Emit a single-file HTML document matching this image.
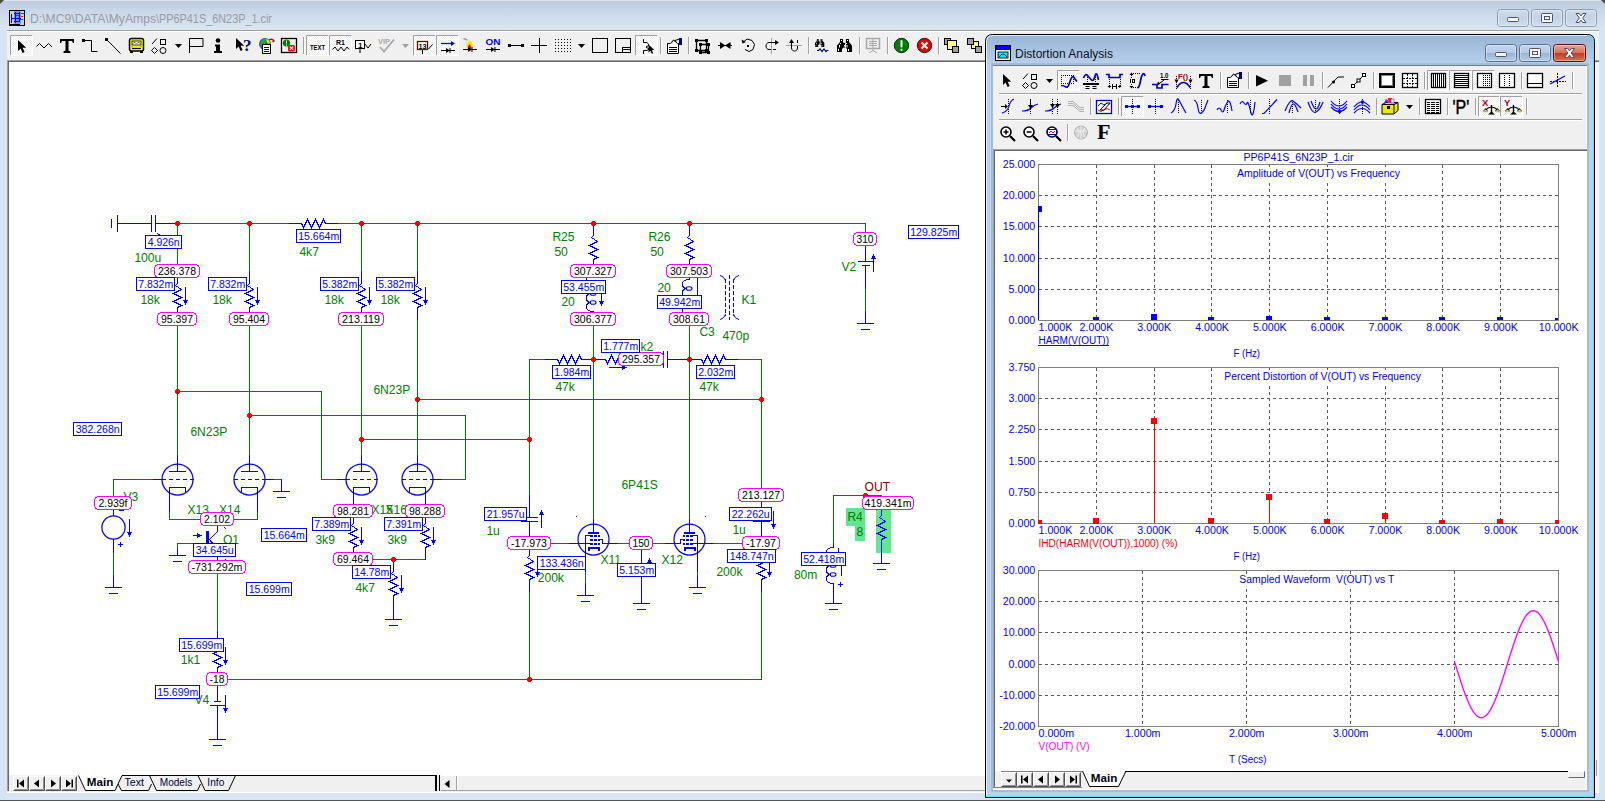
<!DOCTYPE html>
<html><head><meta charset="utf-8"><title>MC9</title>
<style>
html,body{margin:0;padding:0;background:#d7e4f2;overflow:hidden}
svg{display:block;font-family:"Liberation Sans",sans-serif}
text{white-space:pre}
</style></head><body>
<svg width="1605" height="801" viewBox="0 0 1605 801">
<defs>
<linearGradient id="gMain" x1="0" y1="0" x2="0" y2="1"><stop offset="0" stop-color="#bccadb"/><stop offset="0.35" stop-color="#c9d7e8"/><stop offset="1" stop-color="#dbe6f3"/></linearGradient>
<linearGradient id="gDist" gradientUnits="userSpaceOnUse" x1="0" y1="35" x2="0" y2="66"><stop offset="0" stop-color="#98b4d4"/><stop offset="0.5" stop-color="#a9c4e1"/><stop offset="1" stop-color="#b9d1ea"/></linearGradient>
<linearGradient id="gBtnI" x1="0" y1="0" x2="0" y2="1"><stop offset="0" stop-color="#cfdbea"/><stop offset="0.5" stop-color="#c4d2e4"/><stop offset="1" stop-color="#d3dfee"/></linearGradient>
<linearGradient id="gBtnA" x1="0" y1="0" x2="0" y2="1"><stop offset="0" stop-color="#c3d7ee"/><stop offset="0.48" stop-color="#b4cbe6"/><stop offset="0.5" stop-color="#98b4d4"/><stop offset="1" stop-color="#b6cfea"/></linearGradient>
<linearGradient id="gBtnR" x1="0" y1="0" x2="0" y2="1"><stop offset="0" stop-color="#e9a99b"/><stop offset="0.48" stop-color="#d8705b"/><stop offset="0.5" stop-color="#c03a1e"/><stop offset="1" stop-color="#d8765c"/></linearGradient>
<pattern id="dith" width="2" height="2" patternUnits="userSpaceOnUse"><rect width="2" height="2" fill="#fff"/><rect width="1" height="1" fill="#f0f0f0"/><rect x="1" y="1" width="1" height="1" fill="#f0f0f0"/></pattern>
</defs>

<rect x="0" y="0" width="1605" height="801" fill="#d7e4f2"/>
<rect x="0" y="0" width="1605" height="30" fill="url(#gMain)"/>
<rect x="0" y="800" width="1605" height="1" fill="#555"/>
<path d="M0 0h4L0 4z" fill="#4a4a4a"/><path d="M1605 0h-4l4 4z" fill="#4a4a4a"/>
<rect x="7" y="30" width="1592" height="763" fill="#f0f0f0"/>
<rect x="7" y="30" width="1592" height="1" fill="#a0a0a0"/><rect x="7" y="31" width="1592" height="1" fill="#fff"/>
<rect x="4" y="0" width="1597" height="1" fill="#e0e6f0"/>
<rect x="7" y="792" width="1592" height="1" fill="#fff"/>
<rect x="7" y="60" width="1592" height="1" fill="#a0a0a0"/><rect x="7" y="61" width="1592" height="1" fill="#696969"/>
<rect x="7" y="60" width="1" height="731" fill="#a0a0a0"/><rect x="8" y="61" width="1" height="730" fill="#696969"/>
<rect x="9" y="62" width="1590" height="713" fill="#fff"/>
<rect x="9" y="10" width="16" height="16" fill="#000"/><rect x="10" y="11" width="14" height="13" fill="#d4d0c8"/>
<rect x="14" y="11" width="7" height="13" fill="#6f9cf0"/>
<path d="M11.5 14v9M15.5 12v11M19.5 12v9M11 18.5h10M14 13.5h6M14 21.5h6" stroke="#0000ff" fill="none"/>
<path d="M16 15.5h3M21 13.5h3M21 16.5h2M20 19.5h3" stroke="#ff0000" fill="none"/>
<rect x="20" y="24" width="4" height="1" fill="#d4d0c8"/>
<text x="30" y="23" fill="#9a9aa4" font-size="12.8" text-anchor="start" stroke="none" textLength="126" lengthAdjust="spacingAndGlyphs">D:\MC9\DATA\MyAmps</text>
<text x="156" y="23" fill="#9a9aa4" font-size="12.8" text-anchor="start" stroke="none" textLength="116" lengthAdjust="spacingAndGlyphs">\PP6P41S_6N23P_1.cir</text>
<rect x="1497.5" y="9.5" width="31" height="17" rx="3" fill="url(#gBtnI)" stroke="#8c9ab4"/>
<rect x="1498.5" y="10.5" width="29" height="15" rx="2" fill="none" stroke="#ffffff" stroke-opacity="0.35"/>
<rect x="1507.5" y="17.5" width="11" height="4" rx="1" fill="#f4f4f4" stroke="#4d5366"/>
<rect x="1531.5" y="9.5" width="31" height="17" rx="3" fill="url(#gBtnI)" stroke="#8c9ab4"/>
<rect x="1532.5" y="10.5" width="29" height="15" rx="2" fill="none" stroke="#ffffff" stroke-opacity="0.35"/>
<rect x="1541.5" y="13.5" width="11" height="9" rx="1" fill="#f4f4f4" stroke="#4d5366"/>
<rect x="1544.5" y="16.5" width="5" height="3" fill="none" stroke="#4d5366"/>
<rect x="1565.5" y="9.5" width="31" height="17" rx="3" fill="url(#gBtnI)" stroke="#8c9ab4"/>
<rect x="1566.5" y="10.5" width="29" height="15" rx="2" fill="none" stroke="#ffffff" stroke-opacity="0.35"/>
<path d="M1576.0 13.5h3.2l1.8 2.4 1.8 -2.4h3.2l-3.4 4.5 3.4 4.5h-3.2l-1.8 -2.4 -1.8 2.4h-3.2l3.4 -4.5z" fill="#f6f6f6" stroke="#4d5366" stroke-width="1" stroke-linejoin="round"/>
<rect x="10" y="35" width="23" height="21" fill="url(#dith)"/>
<path d="M10.5 55.5V35.5H32.5" stroke="#a0a0a0" fill="none"/>
<path d="M10.5 55.5H32.5V35.5" stroke="#ffffff" fill="none"/>
<g transform="translate(18,40)" ><path d="M0 0v11l2.6-2.4 2 4.4 2-0.9-2-4.3h3.6z" fill="#000"/></g>
<path d="M36.5 46.500l3-3 4.5 4.5 4.500-4.5 3.5 3.5" stroke="#000" fill="none"/>
<g transform="translate(60,39)" ><path d="M0 0h14v4h-1l-1-2h-3.5v9.500l2 1v1.500h-7v-1.500l2-1v-9.500h-3.500l-1 2h-1z" fill="#000"/></g>
<rect x="82" y="39" width="3" height="3" fill="#000"/><path d="M84 40.500h7.500v11h6" stroke="#000" fill="none"/>
<rect x="105" y="38" width="3" height="3" fill="#000"/><path d="M106.5 39.500l14 14" stroke="#000" fill="none"/>
<g transform="translate(129,38)" ><rect x="0.5" y="0.5" width="14" height="12.5" rx="2" fill="#ffff00" stroke="#000" stroke-width="1.5"/><rect x="3" y="3" width="9" height="4" fill="#fff" stroke="#000" stroke-width="0.800"/><path d="M4 5.500c1-1.5 2-1.5 3 0M8 5.500c1-1.5 2-1.5 3 0" stroke="#000" fill="none" stroke-width="0.800"/><path d="M3 10.500h9" stroke="#000" stroke-width="1.200"/><rect x="1" y="13" width="3" height="2" fill="#000"/><rect x="11" y="13" width="3" height="2" fill="#000"/><rect x="2" y="8" width="2" height="1.5" fill="#c8c800"/><rect x="11" y="8" width="2" height="1.5" fill="#c8c800"/></g>
<g transform="translate(151,38)" ><g fill="none" stroke="#000"><path d="M1 6L6 0.5"/><rect x="9.5" y="1.5" width="5" height="5"/><path d="M3.5 9.5l3 3-3 3-3-3z"/><circle cx="12" cy="12.5" r="3"/></g></g>
<path d="M175 44h7l-3.5 4z" fill="#000"/>
<path d="M189.5 38.500v14.500M189.5 38.500h13.500v8h-13.5" stroke="#000" fill="none"/>
<circle cx="218" cy="40.5" r="2.300" fill="#000"/><path d="M215 44.500h5v6.500h2v2h-8v-2h2v-4.500h-1z" fill="#000"/>
<g transform="translate(236,38)" ><path d="M0 0v11l2.6-2.4 2 4.4 2-0.9-2-4.3h3.6z" fill="#000"/></g>
<text x="243" y="51" fill="#000080" font-size="17" text-anchor="start" stroke="none" font-weight="bold" font-family="Liberation Serif">?</text>
<circle cx="265" cy="44" r="6" fill="#1c62c4"/><path d="M261 41q2-3 5-2l1 3-3 2-2 3-2-3z" fill="#1db01d"/><path d="M266 39l3 1 1 3-2 1z" fill="#e0e020"/>
<rect x="262.5" y="44.5" width="8" height="9" fill="#fff" stroke="#000"/><path d="M264 47.500h5M264 49.500h5M264 51.500h5" stroke="#0000c0"/>
<path d="M269 40q3-2 5 1l-1.5 1" stroke="#a01818" fill="none" stroke-width="1.5"/>
<rect x="281.5" y="38.5" width="15" height="14" fill="#f0f0f0" stroke="#000" stroke-width="1.300"/>
<circle cx="286.5" cy="43" r="3.600" fill="#008000"/><rect x="286" y="40.5" width="1" height="3" fill="#fff"/><rect x="286" y="44.5" width="1" height="1" fill="#fff"/>
<rect x="288" y="45" width="7" height="6.5" rx="1.5" fill="#ff0000"/><path d="M289.800 46.500l3.400 3.400M293.200 46.500l-3.400 3.400" stroke="#fff" stroke-width="1.100"/>
<rect x="303" y="37" width="1" height="17" fill="#a0a0a0"/><rect x="304" y="37" width="1" height="17" fill="#fff"/>
<rect x="306" y="35" width="23" height="21" fill="url(#dith)"/>
<path d="M306.5 55.5V35.5H328.5" stroke="#a0a0a0" fill="none"/>
<path d="M306.5 55.5H328.5V35.5" stroke="#ffffff" fill="none"/>
<text x="310" y="49.5" fill="#000" font-size="7.5" text-anchor="start" stroke="none" font-weight="bold" textLength="15" lengthAdjust="spacingAndGlyphs">TEXT</text>
<rect x="329" y="35" width="23" height="21" fill="url(#dith)"/>
<path d="M329.5 55.5V35.5H351.5" stroke="#a0a0a0" fill="none"/>
<path d="M329.5 55.5H351.5V35.5" stroke="#ffffff" fill="none"/>
<text x="336" y="44.5" fill="#000" font-size="7" text-anchor="start" stroke="none" font-weight="bold">R1</text>
<path d="M332.5 49.500l2.500-2.5 3 4 3-4 3 4 3-4 2 2.5" stroke="#000" fill="none"/>
<rect x="355.5" y="40.5" width="9" height="8" fill="#fff" stroke="#000"/><path d="M360 49v4M365 44l3 4 3-4" stroke="#000" fill="none"/>
<text x="358" y="47.5" fill="#000" font-size="8" text-anchor="start" stroke="none" font-weight="bold">1</text>
<text x="378" y="44" fill="#a8a8a8" font-size="7.5" text-anchor="start" stroke="none" font-weight="bold" textLength="12" lengthAdjust="spacingAndGlyphs">VIP</text>
<path d="M380 47l4 4.5 10-12" stroke="#a8a8a8" fill="none" stroke-width="1.800"/>
<path d="M402 44h7l-3.5 4z" fill="#a0a0a0"/>
<rect x="413" y="35" width="23" height="21" fill="url(#dith)"/>
<path d="M413.5 55.5V35.5H435.5" stroke="#a0a0a0" fill="none"/>
<path d="M413.5 55.5H435.5V35.5" stroke="#ffffff" fill="none"/>
<rect x="417.5" y="41.5" width="10" height="8" fill="#fff" stroke="#800000" stroke-width="1.300"/><path d="M422.5 50v4M428.5 49l4-4.5" stroke="#000" fill="none"/>
<text x="418.5" y="48.5" fill="#000" font-size="8" text-anchor="start" stroke="none" font-weight="bold" textLength="8" lengthAdjust="spacingAndGlyphs">13</text>
<rect x="436" y="35" width="23" height="21" fill="url(#dith)"/>
<path d="M436.5 55.5V35.5H458.5" stroke="#a0a0a0" fill="none"/>
<path d="M436.5 55.5H458.5V35.5" stroke="#ffffff" fill="none"/>
<path d="M441 43.500h12" stroke="#0000ff" stroke-width="1.300" fill="none"/><path d="M451 41l4 2.500-4 2.500z" fill="#0000ff"/>
<g transform="translate(441,48)" ><path d="M0 2.500h14M9 0v5" stroke="#000" fill="none"/><path d="M5 0v5l4-2.500z" fill="#000"/></g>
<path d="M469.5 44c-2.5 2-2 5.5 0 6.5 2-1 2.500-4.5 0-6.500z" fill="#ff0000"/><path d="M469.5 40c-4 3-4 8-1.5 10-1-3 0-5 1.500-6 1.5 1 2.5 3 1.5 6 2.500-2 2.500-7-1.500-10z" fill="#ffe800"/><path d="M463.5 38.500l4 1.5" stroke="#a0a0a0" stroke-width="1.5"/>
<g transform="translate(463,47)" ><path d="M0 2.500h14M9 0v5" stroke="#000" fill="none"/><path d="M5 0v5l4-2.500z" fill="#000"/></g>
<text x="485.5" y="45" fill="#0000ff" font-size="9.5" text-anchor="start" stroke="none" font-weight="bold" textLength="15" lengthAdjust="spacingAndGlyphs">ON</text>
<g transform="translate(486,47)" ><path d="M0 2.500h14M9 0v5" stroke="#000" fill="none"/><path d="M5 0v5l4-2.500z" fill="#000"/></g>
<rect x="508" y="44" width="3" height="3" fill="#000"/><rect x="521" y="44" width="3" height="3" fill="#000"/><path d="M509 45.500h14" stroke="#000"/>
<path d="M531 45.500h16M539.5 38v15" stroke="#000" fill="none"/>
<g fill="#000"><rect x="555" y="39" width="1" height="1"/><rect x="555" y="42" width="1" height="1"/><rect x="555" y="45" width="1" height="1"/><rect x="555" y="48" width="1" height="1"/><rect x="555" y="51" width="1" height="1"/><rect x="558" y="39" width="1" height="1"/><rect x="558" y="42" width="1" height="1"/><rect x="558" y="45" width="1" height="1"/><rect x="558" y="48" width="1" height="1"/><rect x="558" y="51" width="1" height="1"/><rect x="561" y="39" width="1" height="1"/><rect x="561" y="42" width="1" height="1"/><rect x="561" y="45" width="1" height="1"/><rect x="561" y="48" width="1" height="1"/><rect x="561" y="51" width="1" height="1"/><rect x="564" y="39" width="1" height="1"/><rect x="564" y="42" width="1" height="1"/><rect x="564" y="45" width="1" height="1"/><rect x="564" y="48" width="1" height="1"/><rect x="564" y="51" width="1" height="1"/><rect x="567" y="39" width="1" height="1"/><rect x="567" y="42" width="1" height="1"/><rect x="567" y="45" width="1" height="1"/><rect x="567" y="48" width="1" height="1"/><rect x="567" y="51" width="1" height="1"/><rect x="570" y="39" width="1" height="1"/><rect x="570" y="42" width="1" height="1"/><rect x="570" y="45" width="1" height="1"/><rect x="570" y="48" width="1" height="1"/><rect x="570" y="51" width="1" height="1"/></g>
<path d="M578 44h7l-3.5 4z" fill="#000"/>
<rect x="592.5" y="38.5" width="15" height="14" fill="none" stroke="#000"/>
<rect x="615.5" y="38.5" width="15" height="14" fill="none" stroke="#000"/><rect x="622.5" y="47.5" width="8" height="5" fill="none" stroke="#000"/><path d="M623 49.500h7" stroke="#000"/>
<rect x="635" y="35" width="23" height="21" fill="url(#dith)"/>
<path d="M635.5 55.5V35.5H657.5" stroke="#a0a0a0" fill="none"/>
<path d="M635.5 55.5H657.5V35.5" stroke="#ffffff" fill="none"/>
<path d="M643.5 39v3.500h3.500l2 2.500-3 2 3 2-2 1.500h-3.500v3.5" stroke="#000" fill="none"/>
<g transform="translate(648.500,44.500) scale(0.72)"><path d="M0 0v11l2.6-2.4 2 4.4 2-0.9-2-4.3h3.6z" fill="#000"/></g>
<rect x="660" y="37" width="1" height="17" fill="#a0a0a0"/><rect x="661" y="37" width="1" height="17" fill="#fff"/>
<g transform="translate(666,38)" ><g stroke="#000" fill="none"><path d="M1.5 15.500v-10h3l3-3.5 4 3.500h1v10z" fill="#fff"/><path d="M3 9.500h8M3 11.500h8M3 13.500h8"/><path d="M6 4.500l2-2.5 3 2.5" stroke-dasharray="1 1"/><path d="M9 2.500l4.500-1.5" /><rect x="13.5" y="0.5" width="2" height="6" fill="#00008b" stroke="#00008b"/></g></g>
<rect x="688" y="37" width="1" height="17" fill="#a0a0a0"/><rect x="689" y="37" width="1" height="17" fill="#fff"/>
<path d="M696.5 40.500h10v10h-10zM700.5 44.500h8v8h-8z" stroke="#000" fill="none" stroke-width="1.300"/>
<rect x="695" y="39" width="3" height="3" fill="#000"/>
<rect x="705" y="39" width="3" height="3" fill="#000"/>
<rect x="695" y="49" width="3" height="3" fill="#000"/>
<rect x="705" y="49" width="3" height="3" fill="#000"/>
<rect x="699" y="43" width="3" height="3" fill="#000"/>
<rect x="707" y="43" width="3" height="3" fill="#000"/>
<rect x="699" y="51" width="3" height="3" fill="#000"/>
<rect x="707" y="51" width="3" height="3" fill="#000"/>
<path d="M718 45.500h14" stroke="#000"/><path d="M720 42l5.5 3.500-5.5 3.500zM730.5 42l-5.5 3.5 5.5 3.500z" fill="#000"/>
<path d="M744 41.500l3-2.5 5 1.5 2.5 4-1.5 5-4 2-4-2" stroke="#000" fill="none"/><path d="M741.5 39.500l1 4 3.500-1.500z" fill="#000"/><rect x="747" y="45" width="2" height="2" fill="#000"/>
<path d="M771.5 38v16" stroke="#a0a0a0"/><path d="M777 42.500h-8c-4 0-4 7 0 7h2M773 49.500h3" stroke="#000" fill="none"/><path d="M775 40l4 2.500-4 2.500z" fill="#000"/>
<path d="M786 45.500h16" stroke="#a0a0a0"/><path d="M791.5 41v7c0 4 6 4 6 0v-2M797.5 43v-3" stroke="#000" fill="none"/><path d="M789 43l2.500-4 2.5 4z" fill="#000"/>
<rect x="808" y="37" width="1" height="17" fill="#a0a0a0"/><rect x="809" y="37" width="1" height="17" fill="#fff"/>
<g transform="translate(815,39) scale(0.62)"><path d="M3 0h3v3l1 1.500v3.500l-2 2v3h-5v-6.500l3-3.500zM12 0h-3v3l-1 1.500v3.500l2 2v3h5v-6.500l-3-3.500zM6 4h3v4.500h-3z" fill="#000"/><g fill="#fff"><rect x="4" y="1" width="1" height="1"/><rect x="10" y="1" width="1" height="1"/><rect x="3" y="4" width="1" height="1"/><rect x="9" y="4" width="1" height="1"/><rect x="2" y="6" width="1" height="2.5"/><rect x="7" y="6" width="1" height="1.5"/><rect x="9.5" y="6" width="1" height="2.5"/><rect x="1" y="10" width="1" height="2"/><rect x="11" y="10" width="1" height="2"/></g></g>
<rect x="815" y="47" width="15" height="7" fill="#f0f0f0"/><rect x="815" y="39" width="15" height="0" fill="none"/>
<path d="M817 50.500h1.500l1.500-1.5 2 2.5 2-2.5 2 2.5 1-1h1.5" stroke="#000080" stroke-width="1.200" fill="none"/>
<g transform="translate(837,39)" ><path d="M3 0h3v3l1 1.500v3.500l-2 2v3h-5v-6.500l3-3.500zM12 0h-3v3l-1 1.500v3.500l2 2v3h5v-6.500l-3-3.500zM6 4h3v4.500h-3z" fill="#000"/><g fill="#fff"><rect x="4" y="1" width="1" height="1"/><rect x="10" y="1" width="1" height="1"/><rect x="3" y="4" width="1" height="1"/><rect x="9" y="4" width="1" height="1"/><rect x="2" y="6" width="1" height="2.5"/><rect x="7" y="6" width="1" height="1.5"/><rect x="9.5" y="6" width="1" height="2.5"/><rect x="1" y="10" width="1" height="2"/><rect x="11" y="10" width="1" height="2"/></g></g>
<rect x="859" y="37" width="1" height="17" fill="#a0a0a0"/><rect x="860" y="37" width="1" height="17" fill="#fff"/>
<g stroke="#a8a8a8" fill="none"><rect x="866.5" y="38.5" width="13" height="10" stroke-width="1.5"/><path d="M869 41.500h8M869 43.500h8M869 45.500h8M873 38v10M873 49v2M869 53l4-2.5 4 2.5"/></g>
<rect x="887" y="37" width="1" height="17" fill="#a0a0a0"/><rect x="888" y="37" width="1" height="17" fill="#fff"/>
<circle cx="901.5" cy="45.5" r="7.200" fill="#008000" stroke="#000" stroke-width="0.800"/><path d="M901.5 41v5.5" stroke="#fff" stroke-width="2" stroke-linecap="round"/><circle cx="901.5" cy="49.800" r="1.100" fill="#fff"/>
<circle cx="924.5" cy="45.5" r="7.200" fill="#ee0000" stroke="#000" stroke-width="0.800"/><path d="M921.5 42.500l6 6M927.5 42.500l-6 6" stroke="#fff" stroke-width="2"/>
<rect x="938" y="37" width="1" height="17" fill="#a0a0a0"/><rect x="939" y="37" width="1" height="17" fill="#fff"/>
<rect x="944.5" y="38.5" width="6" height="6" fill="#a0a0a0" stroke="#000"/><rect x="947.5" y="40.5" width="9" height="9" fill="#ffff80" stroke="#000"/><rect x="952.5" y="46.5" width="6" height="6" fill="#a0a0a0" stroke="#000"/>
<rect x="971.5" y="41.5" width="7" height="7" fill="#ffff80" stroke="#000"/><rect x="967.5" y="38.5" width="6" height="6" fill="#a0a0a0" stroke="#000"/><rect x="975.5" y="46.5" width="6" height="6" fill="#a0a0a0" stroke="#000"/>
<g fill="none" stroke-width="1" stroke-linecap="square" shape-rendering="crispEdges">
<polyline points="177.5,223.5 289.5,223.5" stroke="#008000" />
<polyline points="337.5,223.5 865.5,223.5 865.5,232.5" stroke="#008000" />
<polyline points="177.5,223.5 177.5,271.5" stroke="#008000" />
<polyline points="177.5,319.5 177.5,455.5" stroke="#008000" />
<polyline points="249.5,223.5 249.5,271.5" stroke="#008000" />
<polyline points="249.5,319.5 249.5,455.5" stroke="#008000" />
<polyline points="361.5,223.5 361.5,271.5" stroke="#008000" />
<polyline points="361.5,319.5 361.5,455.5" stroke="#008000" />
<polyline points="417.5,223.5 417.5,271.5" stroke="#008000" />
<polyline points="417.5,319.5 417.5,455.5" stroke="#008000" />
<polyline points="177.5,391.5 321.5,391.5 321.5,479.5 337.5,479.5" stroke="#008000" />
<polyline points="249.5,415.5 465.5,415.5 465.5,479.5 441.5,479.5" stroke="#008000" />
<polyline points="361.5,439.5 529.5,439.5" stroke="#008000" />
<polyline points="417.5,399.5 761.5,399.5" stroke="#008000" />
<polyline points="113.5,496.5 113.5,479.5 153.5,479.5" stroke="#008000" />
<polyline points="113.5,552.5 113.5,575.5" stroke="#008000" />
<polyline points="273.5,479.5 281.5,479.5" stroke="#008000" />
<polyline points="169.5,511.5 169.5,519.5 257.5,519.5 257.5,511.5" stroke="#008000" />
<polyline points="193.5,543.5 177.5,543.5 177.5,549.5" stroke="#008000" />
<polyline points="217.5,574.5 217.5,631.5" stroke="#008000" />
<polyline points="228.5,679.5 761.5,679.5 761.5,591.5" stroke="#008000" />
<polyline points="529.5,679.5 529.5,591.5" stroke="#008000" />
<polyline points="529.5,495.5 529.5,359.5 545.5,359.5" stroke="#008000" />
<polyline points="593.5,326.5 593.5,519.5" stroke="#008000" />
<polyline points="689.5,326.5 689.5,519.5" stroke="#008000" />
<polyline points="737.5,359.5 761.5,359.5 761.5,489.5" stroke="#008000" />
<polyline points="551.5,543.5 569.5,543.5" stroke="#008000" />
<polyline points="653.5,543.5 665.5,543.5" stroke="#008000" />
<polyline points="617.5,543.5 629.5,543.5" stroke="#008000" />
<polyline points="713.5,543.5 742.5,543.5" stroke="#008000" />
<polyline points="353.5,559.5 425.5,559.5" stroke="#008000" />
<polyline points="585.5,567.5 585.5,583.5" stroke="#008000" />
<polyline points="697.5,567.5 697.5,575.5" stroke="#008000" />
<polyline points="865.5,288.5 865.5,311.5" stroke="#008000" />
<polyline points="833.5,543.5 833.5,495.5 881.5,495.5" stroke="#008000" />
<polyline points="111.5,219.5 111.5,227.5" stroke="#0000ff" />
<polyline points="117.5,215.5 117.5,231.5" stroke="#0000ff" />
<polyline points="117.5,223.5 151.5,223.5" stroke="#0000ff" />
<polyline points="151.5,215.5 151.5,231.5" stroke="#0000ff" />
<polyline points="155.5,215.5 155.5,231.5" stroke="#0000ff" />
<polyline points="155.5,223.5 177.5,223.5" stroke="#0000ff" />
<polyline points="157.5,233.5 160.5,235.5" stroke="#0000ff" />
<polyline points="289.5,223.5 301.5,223.5 303.5,227.5 307.5,219.5 311.5,227.5 315.5,219.5 319.5,227.5 323.5,219.5 325.5,223.5 337.5,223.5" stroke="#0000ff" />
<polyline points="177.5,271.5 177.5,283.5 175.5,285.5 181.5,289.5 173.5,293.5 181.5,297.5 173.5,301.5 181.5,305.5 177.5,307.5 177.5,319.5" stroke="#0000ff" />
<polyline points="185.5,287.5 185.5,303.5" stroke="#0000ff" />
<path d="M183 300h5l-2.5 5z" fill="#0000ff" stroke="none"/>
<polyline points="249.5,271.5 249.5,283.5 247.5,285.5 253.5,289.5 245.5,293.5 253.5,297.5 245.5,301.5 253.5,305.5 249.5,307.5 249.5,319.5" stroke="#0000ff" />
<polyline points="257.5,287.5 257.5,303.5" stroke="#0000ff" />
<path d="M255 300h5l-2.5 5z" fill="#0000ff" stroke="none"/>
<polyline points="361.5,271.5 361.5,283.5 359.5,285.5 365.5,289.5 357.5,293.5 365.5,297.5 357.5,301.5 365.5,305.5 361.5,307.5 361.5,319.5" stroke="#0000ff" />
<polyline points="369.5,287.5 369.5,303.5" stroke="#0000ff" />
<path d="M367 300h5l-2.5 5z" fill="#0000ff" stroke="none"/>
<polyline points="417.5,271.5 417.5,283.5 415.5,285.5 421.5,289.5 413.5,293.5 421.5,297.5 413.5,301.5 421.5,305.5 417.5,307.5 417.5,319.5" stroke="#0000ff" />
<polyline points="425.5,287.5 425.5,303.5" stroke="#0000ff" />
<path d="M423 300h5l-2.5 5z" fill="#0000ff" stroke="none"/>
<polyline points="593.5,223.5 593.5,235.5 591.5,237.5 597.5,241.5 589.5,245.5 597.5,249.5 589.5,253.5 597.5,257.5 593.5,259.5 593.5,271.5" stroke="#0000ff" />
<polyline points="689.5,223.5 689.5,235.5 687.5,237.5 693.5,241.5 685.5,245.5 693.5,249.5 685.5,253.5 693.5,257.5 689.5,259.5 689.5,271.5" stroke="#0000ff" />
<polyline points="593.5,271.5 593.5,275.5" stroke="#0000ff" />
<path d="M593.5 275.5C587.5 275.5 586.5 277.5 586.5 280.0C586.5 282.5 587.5 284.5 590.5 284.5M590.5 284.5C587.5 284.5 586.5 286.5 586.5 289.0C586.5 291.5 587.5 293.5 590.5 293.5M590.5 293.5C587.5 293.5 586.5 295.5 586.5 298.0C586.5 300.5 587.5 302.5 590.5 302.5M590.5 302.5C587.5 302.5 586.5 304.5 586.5 307.0C586.5 309.5 587.5 311.5 593.5 311.5" stroke="#0000ff" shape-rendering="crispEdges"/>
<ellipse cx="593.0" cy="284.5" rx="3" ry="1.8" stroke="#0000ff" shape-rendering="auto" stroke-width="1.1"/>
<ellipse cx="593.0" cy="293.5" rx="3" ry="1.8" stroke="#0000ff" shape-rendering="auto" stroke-width="1.1"/>
<ellipse cx="593.0" cy="302.5" rx="3" ry="1.8" stroke="#0000ff" shape-rendering="auto" stroke-width="1.1"/>
<polyline points="593.5,311.5 593.5,319.5" stroke="#0000ff" />
<polyline points="601.5,282.5 601.5,304.5" stroke="#0000ff" />
<path d="M599 301h5l-2.5 5z" fill="#0000ff" stroke="none"/>
<polyline points="689.5,271.5 689.5,279.5" stroke="#0000ff" />
<path d="M689.5 279.5C683.5 279.5 682.5 281.5 682.5 284.0C682.5 286.5 683.5 288.5 686.5 288.5M686.5 288.5C683.5 288.5 682.5 290.5 682.5 293.0C682.5 295.5 683.5 297.5 686.5 297.5M686.5 297.5C683.5 297.5 682.5 299.5 682.5 302.0C682.5 304.5 683.5 306.5 686.5 306.5M686.5 306.5C683.5 306.5 682.5 308.5 682.5 311.0C682.5 313.5 683.5 315.5 689.5 315.5" stroke="#0000ff" shape-rendering="crispEdges"/>
<ellipse cx="689.0" cy="288.5" rx="3" ry="1.8" stroke="#0000ff" shape-rendering="auto" stroke-width="1.1"/>
<ellipse cx="689.0" cy="297.5" rx="3" ry="1.8" stroke="#0000ff" shape-rendering="auto" stroke-width="1.1"/>
<ellipse cx="689.0" cy="306.5" rx="3" ry="1.8" stroke="#0000ff" shape-rendering="auto" stroke-width="1.1"/>
<polyline points="689.5,315.5 689.5,319.5" stroke="#0000ff" />
<polyline points="697.5,274.5 697.5,305.5" stroke="#0000ff" />
<path d="M695 278h5l-2.5 -5z" fill="#0000ff" stroke="none"/>
<path d="M725.5 279V316" stroke="#0000ff" stroke-dasharray="4 2" stroke-linecap="butt"/>
<path d="M729.5 275V320" stroke="#0000ff" stroke-dasharray="4 2" stroke-linecap="butt"/>
<path d="M733.5 279V316" stroke="#0000ff" stroke-dasharray="4 2" stroke-linecap="butt"/>
<path d="M720.5 275.500q4 1 5 5M738.5 275.500q-4 1-5 5M720.5 319.500q4-1 5-5M738.5 319.500q-4-1-5-5" stroke="#0000ff" shape-rendering="auto"/>
<polyline points="865.5,246.5 865.5,261.5" stroke="#0000ff" />
<polyline points="858.5,261.5 872.5,261.5" stroke="#0000ff" />
<polyline points="862.5,265.5 869.5,265.5" stroke="#0000ff" />
<polyline points="865.5,265.5 865.5,288.5" stroke="#0000ff" />
<polyline points="865.5,311.5 865.5,323.5" stroke="#0000ff" />
<polyline points="857.5,323.5 873.5,323.5" stroke="#0000ff" />
<polyline points="861.5,329.5 869.5,329.5" stroke="#0000ff" />
<polyline points="873.5,255.5 873.5,271.5" stroke="#0000ff" />
<path d="M871 259h5l-2.5 -5z" fill="#0000ff" stroke="none"/>
<polyline points="545.5,359.5 557.5,359.5 559.5,363.5 563.5,355.5 567.5,363.5 571.5,355.5 575.5,363.5 579.5,355.5 581.5,359.5 593.5,359.5" stroke="#0000ff" />
<polyline points="689.5,359.5 701.5,359.5 703.5,363.5 707.5,355.5 711.5,363.5 715.5,355.5 719.5,363.5 723.5,355.5 725.5,359.5 737.5,359.5" stroke="#0000ff" />
<polyline points="593.5,359.5 605.5,359.5 607.5,363.5 611.5,355.5 615.5,363.5 619.5,355.5 623.5,363.5" stroke="#0000ff" />
<polyline points="609.5,367.5 625.5,367.5" stroke="#0000ff" />
<path d="M622 365v5l5 -2.5z" fill="#0000ff" stroke="none"/>
<polyline points="663.5,351.5 663.5,367.5" stroke="#0000ff" />
<polyline points="667.5,351.5 667.5,367.5" stroke="#0000ff" />
<polyline points="667.5,359.5 689.5,359.5" stroke="#0000ff" />
<circle cx="177.5" cy="479.5" r="15.5" stroke="#0000ff" stroke-width="1.25" shape-rendering="geometricPrecision"/>
<polyline points="177.5,455.5 177.5,471.5" stroke="#0000ff" />
<polyline points="169.5,471.5 185.5,471.5" stroke="#0000ff" />
<path d="M161.5 479.5H193.5" stroke="#0000ff" stroke-dasharray="4 3" stroke-dashoffset="-0.5" stroke-linecap="butt"/>
<polyline points="153.5,479.5 161.5,479.5" stroke="#0000ff" />
<polyline points="169.5,511.5 169.5,487.5 185.5,487.5 185.5,491.5" stroke="#0000ff" />
<circle cx="249.5" cy="479.5" r="15.5" stroke="#0000ff" stroke-width="1.25" shape-rendering="geometricPrecision"/>
<polyline points="249.5,455.5 249.5,471.5" stroke="#0000ff" />
<polyline points="241.5,471.5 257.5,471.5" stroke="#0000ff" />
<path d="M233.5 479.5H265.5" stroke="#0000ff" stroke-dasharray="4 3" stroke-dashoffset="-0.5" stroke-linecap="butt"/>
<polyline points="273.5,479.5 265.5,479.5" stroke="#0000ff" />
<polyline points="257.5,511.5 257.5,487.5 241.5,487.5 241.5,491.5" stroke="#0000ff" />
<circle cx="361.5" cy="479.5" r="15.5" stroke="#0000ff" stroke-width="1.25" shape-rendering="geometricPrecision"/>
<polyline points="361.5,455.5 361.5,471.5" stroke="#0000ff" />
<polyline points="353.5,471.5 369.5,471.5" stroke="#0000ff" />
<path d="M345.5 479.5H377.5" stroke="#0000ff" stroke-dasharray="4 3" stroke-dashoffset="-0.5" stroke-linecap="butt"/>
<polyline points="337.5,479.5 345.5,479.5" stroke="#0000ff" />
<polyline points="353.5,511.5 353.5,487.5 369.5,487.5 369.5,491.5" stroke="#0000ff" />
<circle cx="417.5" cy="479.5" r="15.5" stroke="#0000ff" stroke-width="1.25" shape-rendering="geometricPrecision"/>
<polyline points="417.5,455.5 417.5,471.5" stroke="#0000ff" />
<polyline points="409.5,471.5 425.5,471.5" stroke="#0000ff" />
<path d="M401.5 479.5H433.5" stroke="#0000ff" stroke-dasharray="4 3" stroke-dashoffset="-0.5" stroke-linecap="butt"/>
<polyline points="441.5,479.5 433.5,479.5" stroke="#0000ff" />
<polyline points="425.5,511.5 425.5,487.5 409.5,487.5 409.5,491.5" stroke="#0000ff" />
<polyline points="281.5,479.5 281.5,491.5" stroke="#0000ff" />
<polyline points="273.5,491.5 289.5,491.5" stroke="#0000ff" />
<polyline points="277.5,497.5 285.5,497.5" stroke="#0000ff" />
<circle cx="113.5" cy="527.5" r="11.6" stroke="#0000ff" stroke-width="1.25" shape-rendering="geometricPrecision"/>
<polyline points="113.5,510.5 113.5,515.5" stroke="#0000ff" />
<polyline points="113.5,539.5 113.5,552.5" stroke="#0000ff" />
<polyline points="113.5,575.5 113.5,587.5" stroke="#0000ff" />
<polyline points="105.5,587.5 121.5,587.5" stroke="#0000ff" />
<polyline points="109.5,593.5 117.5,593.5" stroke="#0000ff" />
<polyline points="119.5,510.5 123.5,510.5" stroke="#0000ff" />
<polyline points="118.5,544.5 122.5,544.5" stroke="#0000ff" />
<polyline points="120.5,542.5 120.5,546.5" stroke="#0000ff" />
<polyline points="129.5,519.5 129.5,535.5" stroke="#0000ff" />
<path d="M127 532h5l-2.5 5z" fill="#0000ff" stroke="none"/>
<rect x="206" y="531" width="3" height="13" fill="#0000ff" stroke="none" />
<polyline points="209.5,539.5 217.5,531.5 217.5,526.5" stroke="#0000ff" />
<polyline points="209.5,539.5 217.5,549.5 217.5,563.5" stroke="#0000ff" />
<polyline points="193.5,535.5 199.5,535.5" stroke="#0000ff" />
<path d="M197 533v5l5-2.500z" fill="#0000ff" stroke="none"/>
<polyline points="193.5,543.5 206.5,543.5" stroke="#0000ff" />
<polyline points="177.5,549.5 177.5,555.5" stroke="#0000ff" />
<polyline points="169.5,555.5 185.5,555.5" stroke="#0000ff" />
<polyline points="173.5,561.5 181.5,561.5" stroke="#0000ff" />
<polyline points="224.5,527.5 225.5,528.5" stroke="#0000ff" />
<polyline points="225.5,559.5 225.5,559.5" stroke="#0000ff" />
<polyline points="353.5,511.5 353.5,523.5 351.5,525.5 357.5,529.5 349.5,533.5 357.5,537.5 349.5,541.5 357.5,545.5 353.5,547.5 353.5,559.5" stroke="#0000ff" />
<polyline points="361.5,527.5 361.5,543.5" stroke="#0000ff" />
<path d="M359 540h5l-2.5 5z" fill="#0000ff" stroke="none"/>
<polyline points="425.5,511.5 425.5,523.5 423.5,525.5 429.5,529.5 421.5,533.5 429.5,537.5 421.5,541.5 429.5,545.5 425.5,547.5 425.5,559.5" stroke="#0000ff" />
<polyline points="433.5,527.5 433.5,543.5" stroke="#0000ff" />
<path d="M431 540h5l-2.5 5z" fill="#0000ff" stroke="none"/>
<polyline points="393.5,559.5 393.5,571.5 391.5,573.5 397.5,577.5 389.5,581.5 397.5,585.5 389.5,589.5 397.5,593.5 393.5,595.5 393.5,607.5" stroke="#0000ff" />
<polyline points="401.5,575.5 401.5,591.5" stroke="#0000ff" />
<path d="M399 588h5l-2.5 5z" fill="#0000ff" stroke="none"/>
<polyline points="393.5,607.5 393.5,619.5" stroke="#0000ff" />
<polyline points="385.5,619.5 401.5,619.5" stroke="#0000ff" />
<polyline points="389.5,625.5 397.5,625.5" stroke="#0000ff" />
<polyline points="217.5,631.5 217.5,643.5 215.5,645.5 221.5,649.5 213.5,653.5 221.5,657.5 213.5,661.5 221.5,665.5 217.5,667.5 217.5,679.5" stroke="#0000ff" />
<polyline points="225.5,647.5 225.5,663.5" stroke="#0000ff" />
<path d="M223 660h5l-2.5 5z" fill="#0000ff" stroke="none"/>
<polyline points="217.5,686.5 217.5,701.5" stroke="#0000ff" />
<polyline points="214.5,701.5 220.5,701.5" stroke="#0000ff" />
<polyline points="210.5,705.5 225.5,705.5" stroke="#0000ff" />
<polyline points="217.5,705.5 217.5,739.5" stroke="#0000ff" />
<polyline points="209.5,739.5 225.5,739.5" stroke="#0000ff" />
<polyline points="213.5,745.5 221.5,745.5" stroke="#0000ff" />
<polyline points="225.5,695.5 225.5,711.5" stroke="#0000ff" />
<path d="M223 708h5l-2.5 5z" fill="#0000ff" stroke="none"/>
<polyline points="529.5,495.5 529.5,517.5" stroke="#0000ff" />
<polyline points="521.5,517.5 537.5,517.5" stroke="#0000ff" />
<polyline points="521.5,521.5 537.5,521.5" stroke="#0000ff" />
<polyline points="529.5,521.5 529.5,543.5" stroke="#0000ff" />
<polyline points="541.5,511.5 541.5,527.5" stroke="#0000ff" />
<path d="M539 515h5l-2.5 -5z" fill="#0000ff" stroke="none"/>
<polyline points="529.5,543.5 529.5,555.5 527.5,557.5 533.5,561.5 525.5,565.5 533.5,569.5 525.5,573.5 533.5,577.5 529.5,579.5 529.5,591.5" stroke="#0000ff" />
<polyline points="537.5,559.5 537.5,575.5" stroke="#0000ff" />
<path d="M535 572h5l-2.5 5z" fill="#0000ff" stroke="none"/>
<polyline points="761.5,502.5 761.5,517.5" stroke="#0000ff" />
<polyline points="753.5,517.5 769.5,517.5" stroke="#0000ff" />
<polyline points="753.5,521.5 769.5,521.5" stroke="#0000ff" />
<polyline points="761.5,521.5 761.5,543.5" stroke="#0000ff" />
<polyline points="773.5,511.5 773.5,527.5" stroke="#0000ff" />
<path d="M771 524h5l-2.5 5z" fill="#0000ff" stroke="none"/>
<polyline points="761.5,543.5 761.5,555.5 759.5,557.5 765.5,561.5 757.5,565.5 765.5,569.5 757.5,573.5 765.5,577.5 761.5,579.5 761.5,591.5" stroke="#0000ff" />
<polyline points="769.5,559.5 769.5,575.5" stroke="#0000ff" />
<path d="M767 572h5l-2.5 5z" fill="#0000ff" stroke="none"/>
<polyline points="593.5,519.5 593.5,523.5" stroke="#0000ff" />
<polyline points="689.5,519.5 689.5,523.5" stroke="#0000ff" />
<circle cx="593.5" cy="539.5" r="15.5" stroke="#0000ff" stroke-width="1.25" shape-rendering="geometricPrecision"/>
<polyline points="593.5,519.5 593.5,531.5" stroke="#0000ff" />
<rect x="588" y="532" width="11" height="2" fill="#0000ff" stroke="none" />
<rect x="590" y="535" width="3" height="2" fill="#0000ff" stroke="none" />
<rect x="594" y="535" width="3" height="2" fill="#0000ff" stroke="none" />
<rect x="598" y="535" width="2" height="2" fill="#0000ff" stroke="none" />
<rect x="590" y="539" width="3" height="2" fill="#0000ff" stroke="none" />
<rect x="594" y="539" width="3" height="2" fill="#0000ff" stroke="none" />
<rect x="598" y="539" width="2" height="2" fill="#0000ff" stroke="none" />
<rect x="590" y="543" width="3" height="2" fill="#0000ff" stroke="none" />
<rect x="594" y="543" width="3" height="2" fill="#0000ff" stroke="none" />
<rect x="598" y="543" width="2" height="2" fill="#0000ff" stroke="none" />
<rect x="588" y="547" width="12" height="2" fill="#0000ff" stroke="none" />
<rect x="588" y="549" width="2" height="2" fill="#0000ff" stroke="none" />
<rect x="598" y="549" width="2" height="2" fill="#0000ff" stroke="none" />
<polyline points="590.5,535.5 585.5,535.5 585.5,571.5" stroke="#0000ff" />
<polyline points="569.5,543.5 590.5,543.5" stroke="#0000ff" />
<polyline points="599.5,539.5 602.5,539.5 602.5,543.5 617.5,543.5" stroke="#0000ff" />
<circle cx="689.5" cy="539.5" r="15.5" stroke="#0000ff" stroke-width="1.25" shape-rendering="geometricPrecision"/>
<polyline points="689.5,519.5 689.5,531.5" stroke="#0000ff" />
<rect x="684" y="532" width="11" height="2" fill="#0000ff" stroke="none" />
<rect x="690" y="535" width="3" height="2" fill="#0000ff" stroke="none" />
<rect x="686" y="535" width="3" height="2" fill="#0000ff" stroke="none" />
<rect x="683" y="535" width="2" height="2" fill="#0000ff" stroke="none" />
<rect x="690" y="539" width="3" height="2" fill="#0000ff" stroke="none" />
<rect x="686" y="539" width="3" height="2" fill="#0000ff" stroke="none" />
<rect x="683" y="539" width="2" height="2" fill="#0000ff" stroke="none" />
<rect x="690" y="543" width="3" height="2" fill="#0000ff" stroke="none" />
<rect x="686" y="543" width="3" height="2" fill="#0000ff" stroke="none" />
<rect x="683" y="543" width="2" height="2" fill="#0000ff" stroke="none" />
<rect x="684" y="547" width="12" height="2" fill="#0000ff" stroke="none" />
<rect x="684" y="549" width="2" height="2" fill="#0000ff" stroke="none" />
<rect x="694" y="549" width="2" height="2" fill="#0000ff" stroke="none" />
<polyline points="692.5,535.5 697.5,535.5 697.5,571.5" stroke="#0000ff" />
<polyline points="713.5,543.5 692.5,543.5" stroke="#0000ff" />
<polyline points="683.5,539.5 680.5,539.5 680.5,543.5 665.5,543.5" stroke="#0000ff" />
<polyline points="585.5,583.5 585.5,595.5" stroke="#0000ff" />
<polyline points="577.5,595.5 593.5,595.5" stroke="#0000ff" />
<polyline points="581.5,601.5 589.5,601.5" stroke="#0000ff" />
<polyline points="697.5,575.5 697.5,587.5" stroke="#0000ff" />
<polyline points="689.5,587.5 705.5,587.5" stroke="#0000ff" />
<polyline points="693.5,593.5 701.5,593.5" stroke="#0000ff" />
<polyline points="576.5,516.5 576.5,516.5" stroke="#0000ff" />
<polyline points="705.5,516.5 705.5,516.5" stroke="#0000ff" />
<polyline points="641.5,550.5 641.5,603.5" stroke="#0000ff" />
<polyline points="633.5,603.5 649.5,603.5" stroke="#0000ff" />
<polyline points="637.5,609.5 645.5,609.5" stroke="#0000ff" />
<path d="M647 563h5l-2.500-5z" fill="#0000ff" stroke="none"/>
<polyline points="833.5,543.5 833.5,547.5" stroke="#0000ff" />
<path d="M833.5 547.5C827.5 547.5 826.5 549.5 826.5 552.0C826.5 554.5 827.5 556.5 830.5 556.5M830.5 556.5C827.5 556.5 826.5 558.5 826.5 561.0C826.5 563.5 827.5 565.5 830.5 565.5M830.5 565.5C827.5 565.5 826.5 567.5 826.5 570.0C826.5 572.5 827.5 574.5 830.5 574.5M830.5 574.5C827.5 574.5 826.5 576.5 826.5 579.0C826.5 581.5 827.5 583.5 833.5 583.5" stroke="#0000ff" shape-rendering="crispEdges"/>
<ellipse cx="833.0" cy="556.5" rx="3" ry="1.8" stroke="#0000ff" shape-rendering="auto" stroke-width="1.1"/>
<ellipse cx="833.0" cy="565.5" rx="3" ry="1.8" stroke="#0000ff" shape-rendering="auto" stroke-width="1.1"/>
<ellipse cx="833.0" cy="574.5" rx="3" ry="1.8" stroke="#0000ff" shape-rendering="auto" stroke-width="1.1"/>
<polyline points="833.5,583.5 833.5,603.5" stroke="#0000ff" />
<polyline points="825.5,603.5 841.5,603.5" stroke="#0000ff" />
<polyline points="829.5,609.5 837.5,609.5" stroke="#0000ff" />
<polyline points="841.5,552.5 841.5,575.5" stroke="#0000ff" />
<polyline points="838.5,548.5 838.5,552.5" stroke="#0000ff" />
<polyline points="838.5,584.5 842.5,584.5" stroke="#0000ff" />
<polyline points="840.5,582.5 840.5,586.5" stroke="#0000ff" />
<rect x="846" y="508" width="19" height="18" fill="#63e68f" stroke="none" />
<rect x="855" y="526" width="10" height="15" fill="#63e68f" stroke="none" />
<rect x="876" y="509" width="15" height="44" fill="#63e68f" stroke="none" />
<polyline points="881.5,503.5 881.5,515.5 879.5,517.5 885.5,521.5 877.5,525.5 885.5,529.5 877.5,533.5 885.5,537.5 881.5,539.5 881.5,551.5" stroke="#0000ff" />
<polyline points="881.5,551.5 881.5,563.5" stroke="#0000ff" />
<polyline points="873.5,563.5 889.5,563.5" stroke="#0000ff" />
<polyline points="877.5,569.5 885.5,569.5" stroke="#0000ff" />
<path d="M864 493h3v1h1v3h-1v1h-3v-1h-1v-3h1z" fill="#ff0000" stroke="none"/>
<path d="M176 221h3v1h1v3h-1v1h-3v-1h-1v-3h1z" fill="#ff0000" stroke="none"/>
<path d="M248 221h3v1h1v3h-1v1h-3v-1h-1v-3h1z" fill="#ff0000" stroke="none"/>
<path d="M360 221h3v1h1v3h-1v1h-3v-1h-1v-3h1z" fill="#ff0000" stroke="none"/>
<path d="M416 221h3v1h1v3h-1v1h-3v-1h-1v-3h1z" fill="#ff0000" stroke="none"/>
<path d="M592 221h3v1h1v3h-1v1h-3v-1h-1v-3h1z" fill="#ff0000" stroke="none"/>
<path d="M688 221h3v1h1v3h-1v1h-3v-1h-1v-3h1z" fill="#ff0000" stroke="none"/>
<path d="M176 389h3v1h1v3h-1v1h-3v-1h-1v-3h1z" fill="#ff0000" stroke="none"/>
<path d="M248 413h3v1h1v3h-1v1h-3v-1h-1v-3h1z" fill="#ff0000" stroke="none"/>
<path d="M360 437h3v1h1v3h-1v1h-3v-1h-1v-3h1z" fill="#ff0000" stroke="none"/>
<path d="M416 397h3v1h1v3h-1v1h-3v-1h-1v-3h1z" fill="#ff0000" stroke="none"/>
<path d="M528 437h3v1h1v3h-1v1h-3v-1h-1v-3h1z" fill="#ff0000" stroke="none"/>
<path d="M760 397h3v1h1v3h-1v1h-3v-1h-1v-3h1z" fill="#ff0000" stroke="none"/>
<path d="M592 357h3v1h1v3h-1v1h-3v-1h-1v-3h1z" fill="#ff0000" stroke="none"/>
<path d="M688 357h3v1h1v3h-1v1h-3v-1h-1v-3h1z" fill="#ff0000" stroke="none"/>
<path d="M392 557h3v1h1v3h-1v1h-3v-1h-1v-3h1z" fill="#ff0000" stroke="none"/>
<path d="M528 677h3v1h1v3h-1v1h-3v-1h-1v-3h1z" fill="#ff0000" stroke="none"/>
</g>
<g>
<text x="134.4" y="262" fill="#008000" font-size="12.1" text-anchor="start" stroke="none" >100u</text>
<text x="299.4" y="256" fill="#008000" font-size="12.1" text-anchor="start" stroke="none" >4k7</text>
<text x="140.4" y="304" fill="#008000" font-size="12.1" text-anchor="start" stroke="none" >18k</text>
<text x="212.4" y="304" fill="#008000" font-size="12.1" text-anchor="start" stroke="none" >18k</text>
<text x="324.4" y="304" fill="#008000" font-size="12.1" text-anchor="start" stroke="none" >18k</text>
<text x="380.4" y="304" fill="#008000" font-size="12.1" text-anchor="start" stroke="none" >18k</text>
<text x="552.4" y="241" fill="#008000" font-size="12.1" text-anchor="start" stroke="none" >R25</text>
<text x="554.4" y="256" fill="#008000" font-size="12.1" text-anchor="start" stroke="none" >50</text>
<text x="648.4" y="241" fill="#008000" font-size="12.1" text-anchor="start" stroke="none" >R26</text>
<text x="650.4" y="256" fill="#008000" font-size="12.1" text-anchor="start" stroke="none" >50</text>
<text x="561.4" y="306" fill="#008000" font-size="12.1" text-anchor="start" stroke="none" >20</text>
<text x="657.4" y="292" fill="#008000" font-size="12.1" text-anchor="start" stroke="none" >20</text>
<text x="741.4" y="304" fill="#008000" font-size="12.1" text-anchor="start" stroke="none" >K1</text>
<text x="699.4" y="336" fill="#008000" font-size="12.1" text-anchor="start" stroke="none" >C3</text>
<text x="722.4" y="340" fill="#008000" font-size="12.1" text-anchor="start" stroke="none" >470p</text>
<text x="640.4" y="351" fill="#008000" font-size="12.1" text-anchor="start" stroke="none" >k2</text>
<text x="555.4" y="391" fill="#008000" font-size="12.1" text-anchor="start" stroke="none" >47k</text>
<text x="699.4" y="391" fill="#008000" font-size="12.1" text-anchor="start" stroke="none" >47k</text>
<text x="841.4" y="271" fill="#008000" font-size="12.1" text-anchor="start" stroke="none" >V2</text>
<text x="373.4" y="394" fill="#008000" font-size="12.1" text-anchor="start" stroke="none" >6N23P</text>
<text x="190.4" y="436" fill="#008000" font-size="12.1" text-anchor="start" stroke="none" >6N23P</text>
<text x="621.4" y="489" fill="#008000" font-size="12.1" text-anchor="start" stroke="none" >6P41S</text>
<text x="123.4" y="501" fill="#008000" font-size="12.1" text-anchor="start" stroke="none" >V3</text>
<text x="187.4" y="514" fill="#008000" font-size="12.1" text-anchor="start" stroke="none" >X13</text>
<text x="218.9" y="514" fill="#008000" font-size="12.1" text-anchor="start" stroke="none" >X14</text>
<text x="222.9" y="544" fill="#008000" font-size="12.1" text-anchor="start" stroke="none" >Q1</text>
<text x="371.4" y="514" fill="#008000" font-size="12.1" text-anchor="start" stroke="none" >X15</text>
<text x="385.4" y="514" fill="#008000" font-size="12.1" text-anchor="start" stroke="none" >X16</text>
<text x="315.4" y="544" fill="#008000" font-size="12.1" text-anchor="start" stroke="none" >3k9</text>
<text x="387.4" y="544" fill="#008000" font-size="12.1" text-anchor="start" stroke="none" >3k9</text>
<text x="355.4" y="592" fill="#008000" font-size="12.1" text-anchor="start" stroke="none" >4k7</text>
<text x="486.4" y="535" fill="#008000" font-size="12.1" text-anchor="start" stroke="none" >1u</text>
<text x="732.4" y="534" fill="#008000" font-size="12.1" text-anchor="start" stroke="none" >1u</text>
<text x="537.6999999999999" y="582" fill="#008000" font-size="12.1" text-anchor="start" stroke="none" >200k</text>
<text x="716.4" y="576" fill="#008000" font-size="12.1" text-anchor="start" stroke="none" >200k</text>
<text x="600.4" y="564" fill="#008000" font-size="12.1" text-anchor="start" stroke="none" >X11</text>
<text x="661.4" y="564" fill="#008000" font-size="12.1" text-anchor="start" stroke="none" >X12</text>
<text x="793.9" y="579" fill="#008000" font-size="12.1" text-anchor="start" stroke="none" >80m</text>
<text x="847.4" y="521" fill="#008000" font-size="12.1" text-anchor="start" stroke="none" >R4</text>
<text x="856.4" y="536" fill="#008000" font-size="12.1" text-anchor="start" stroke="none" >8</text>
<text x="180.70000000000002" y="663.5" fill="#008000" font-size="12.1" text-anchor="start" stroke="none" >1k1</text>
<text x="194.4" y="704" fill="#008000" font-size="12.1" text-anchor="start" stroke="none" >V4</text>
<text x="864.6" y="491.3" fill="#800000" font-size="12.1" text-anchor="start" stroke="none" >OUT</text>
</g>
<g stroke-width="1" shape-rendering="crispEdges">
<rect x="154.5" y="264.5" width="45" height="13" rx="4.5" fill="#fff" stroke="#ff00ff" shape-rendering="crispEdges"/>
<text x="177.0" y="275" fill="#000" font-size="11" text-anchor="middle" stroke="none" textLength="38" lengthAdjust="spacingAndGlyphs">236.378</text>
<rect x="157.5" y="312.5" width="39" height="13" rx="4.5" fill="#fff" stroke="#ff00ff" shape-rendering="crispEdges"/>
<text x="177.0" y="323" fill="#000" font-size="11" text-anchor="middle" stroke="none" textLength="32" lengthAdjust="spacingAndGlyphs">95.397</text>
<rect x="229.5" y="312.5" width="39" height="13" rx="4.5" fill="#fff" stroke="#ff00ff" shape-rendering="crispEdges"/>
<text x="249.0" y="323" fill="#000" font-size="11" text-anchor="middle" stroke="none" textLength="32" lengthAdjust="spacingAndGlyphs">95.404</text>
<rect x="338.5" y="312.5" width="45" height="13" rx="4.5" fill="#fff" stroke="#ff00ff" shape-rendering="crispEdges"/>
<text x="361.0" y="323" fill="#000" font-size="11" text-anchor="middle" stroke="none" textLength="38" lengthAdjust="spacingAndGlyphs">213.119</text>
<rect x="570.5" y="264.5" width="45" height="13" rx="4.5" fill="#fff" stroke="#ff00ff" shape-rendering="crispEdges"/>
<text x="593.0" y="275" fill="#000" font-size="11" text-anchor="middle" stroke="none" textLength="38" lengthAdjust="spacingAndGlyphs">307.327</text>
<rect x="666.5" y="264.5" width="45" height="13" rx="4.5" fill="#fff" stroke="#ff00ff" shape-rendering="crispEdges"/>
<text x="689.0" y="275" fill="#000" font-size="11" text-anchor="middle" stroke="none" textLength="38" lengthAdjust="spacingAndGlyphs">307.503</text>
<rect x="570.5" y="312.5" width="45" height="13" rx="4.5" fill="#fff" stroke="#ff00ff" shape-rendering="crispEdges"/>
<text x="593.0" y="323" fill="#000" font-size="11" text-anchor="middle" stroke="none" textLength="38" lengthAdjust="spacingAndGlyphs">306.377</text>
<rect x="669.5" y="312.5" width="39" height="13" rx="4.5" fill="#fff" stroke="#ff00ff" shape-rendering="crispEdges"/>
<text x="689.0" y="323" fill="#000" font-size="11" text-anchor="middle" stroke="none" textLength="32" lengthAdjust="spacingAndGlyphs">308.61</text>
<rect x="853.5" y="232.5" width="23" height="13" rx="4.5" fill="#fff" stroke="#ff00ff" shape-rendering="crispEdges"/>
<text x="865.0" y="243" fill="#000" font-size="11" text-anchor="middle" stroke="none" textLength="17" lengthAdjust="spacingAndGlyphs">310</text>
<rect x="618.5" y="352.5" width="45" height="13" rx="4.5" fill="#fff" stroke="#ff00ff" shape-rendering="crispEdges"/>
<text x="641.0" y="363" fill="#000" font-size="11" text-anchor="middle" stroke="none" textLength="38" lengthAdjust="spacingAndGlyphs">295.357</text>
<rect x="94.5" y="496.5" width="37" height="13" rx="4.5" fill="#fff" stroke="#ff00ff" shape-rendering="crispEdges"/>
<text x="113.0" y="507" fill="#000" font-size="11" text-anchor="middle" stroke="none" textLength="29" lengthAdjust="spacingAndGlyphs">2.939f</text>
<rect x="200.5" y="512.5" width="33" height="13" rx="4.5" fill="#fff" stroke="#ff00ff" shape-rendering="crispEdges"/>
<text x="217.0" y="523" fill="#000" font-size="11" text-anchor="middle" stroke="none" textLength="26" lengthAdjust="spacingAndGlyphs">2.102</text>
<rect x="188.5" y="560.5" width="57" height="13" rx="4.5" fill="#fff" stroke="#ff00ff" shape-rendering="crispEdges"/>
<text x="217.0" y="571" fill="#000" font-size="11" text-anchor="middle" stroke="none" textLength="51" lengthAdjust="spacingAndGlyphs">-731.292m</text>
<rect x="333.5" y="504.5" width="39" height="13" rx="4.5" fill="#fff" stroke="#ff00ff" shape-rendering="crispEdges"/>
<text x="353.0" y="515" fill="#000" font-size="11" text-anchor="middle" stroke="none" textLength="32" lengthAdjust="spacingAndGlyphs">98.281</text>
<rect x="405.5" y="504.5" width="39" height="13" rx="4.5" fill="#fff" stroke="#ff00ff" shape-rendering="crispEdges"/>
<text x="425.0" y="515" fill="#000" font-size="11" text-anchor="middle" stroke="none" textLength="32" lengthAdjust="spacingAndGlyphs">98.288</text>
<rect x="333.5" y="552.5" width="39" height="13" rx="4.5" fill="#fff" stroke="#ff00ff" shape-rendering="crispEdges"/>
<text x="353.0" y="563" fill="#000" font-size="11" text-anchor="middle" stroke="none" textLength="32" lengthAdjust="spacingAndGlyphs">69.464</text>
<rect x="507.5" y="536.5" width="43" height="13" rx="4.5" fill="#fff" stroke="#ff00ff" shape-rendering="crispEdges"/>
<text x="529.0" y="547" fill="#000" font-size="11" text-anchor="middle" stroke="none" textLength="36" lengthAdjust="spacingAndGlyphs">-17.973</text>
<rect x="629.5" y="536.5" width="23" height="13" rx="4.5" fill="#fff" stroke="#ff00ff" shape-rendering="crispEdges"/>
<text x="641.0" y="547" fill="#000" font-size="11" text-anchor="middle" stroke="none" textLength="17" lengthAdjust="spacingAndGlyphs">150</text>
<rect x="742.5" y="536.5" width="37" height="13" rx="4.5" fill="#fff" stroke="#ff00ff" shape-rendering="crispEdges"/>
<text x="761.0" y="547" fill="#000" font-size="11" text-anchor="middle" stroke="none" textLength="30" lengthAdjust="spacingAndGlyphs">-17.97</text>
<rect x="738.5" y="488.5" width="45" height="13" rx="4.5" fill="#fff" stroke="#ff00ff" shape-rendering="crispEdges"/>
<text x="761.0" y="499" fill="#000" font-size="11" text-anchor="middle" stroke="none" textLength="38" lengthAdjust="spacingAndGlyphs">213.127</text>
<rect x="862.5" y="496.5" width="51" height="13" rx="4.5" fill="#fff" stroke="#ff00ff" shape-rendering="crispEdges"/>
<text x="888.0" y="507" fill="#000" font-size="11" text-anchor="middle" stroke="none" textLength="47" lengthAdjust="spacingAndGlyphs">419.341m</text>
<rect x="206.5" y="672.5" width="21" height="13" rx="4.5" fill="#fff" stroke="#ff00ff" shape-rendering="crispEdges"/>
<text x="217.0" y="683" fill="#000" font-size="11" text-anchor="middle" stroke="none" textLength="15" lengthAdjust="spacingAndGlyphs">-18</text>
<rect x="145.5" y="235.5" width="36" height="13" fill="#fff" stroke="#0000ff"/>
<text x="163.7" y="246" fill="#0000ff" font-size="11" text-anchor="middle" stroke="none" textLength="32" lengthAdjust="spacingAndGlyphs">4.926n</text>
<rect x="296.5" y="229.5" width="44" height="13" fill="#fff" stroke="#0000ff"/>
<text x="318.7" y="240" fill="#0000ff" font-size="11" text-anchor="middle" stroke="none" textLength="41" lengthAdjust="spacingAndGlyphs">15.664m</text>
<rect x="136.5" y="277.5" width="38" height="13" fill="#fff" stroke="#0000ff"/>
<text x="155.7" y="288" fill="#0000ff" font-size="11" text-anchor="middle" stroke="none" textLength="35" lengthAdjust="spacingAndGlyphs">7.832m</text>
<rect x="208.5" y="277.5" width="38" height="13" fill="#fff" stroke="#0000ff"/>
<text x="227.7" y="288" fill="#0000ff" font-size="11" text-anchor="middle" stroke="none" textLength="35" lengthAdjust="spacingAndGlyphs">7.832m</text>
<rect x="320.5" y="277.5" width="38" height="13" fill="#fff" stroke="#0000ff"/>
<text x="339.7" y="288" fill="#0000ff" font-size="11" text-anchor="middle" stroke="none" textLength="35" lengthAdjust="spacingAndGlyphs">5.382m</text>
<rect x="376.5" y="277.5" width="38" height="13" fill="#fff" stroke="#0000ff"/>
<text x="395.7" y="288" fill="#0000ff" font-size="11" text-anchor="middle" stroke="none" textLength="35" lengthAdjust="spacingAndGlyphs">5.382m</text>
<rect x="561.5" y="280.5" width="44" height="13" fill="#fff" stroke="#0000ff"/>
<text x="583.7" y="291" fill="#0000ff" font-size="11" text-anchor="middle" stroke="none" textLength="41" lengthAdjust="spacingAndGlyphs">53.455m</text>
<rect x="657.5" y="295.5" width="44" height="13" fill="#fff" stroke="#0000ff"/>
<text x="679.7" y="306" fill="#0000ff" font-size="11" text-anchor="middle" stroke="none" textLength="41" lengthAdjust="spacingAndGlyphs">49.942m</text>
<rect x="908.5" y="225.5" width="50" height="13" fill="#fff" stroke="#0000ff"/>
<text x="933.7" y="236" fill="#0000ff" font-size="11" text-anchor="middle" stroke="none" textLength="47" lengthAdjust="spacingAndGlyphs">129.825m</text>
<rect x="601.5" y="339.5" width="38" height="13" fill="#fff" stroke="#0000ff"/>
<text x="620.7" y="350" fill="#0000ff" font-size="11" text-anchor="middle" stroke="none" textLength="35" lengthAdjust="spacingAndGlyphs">1.777m</text>
<rect x="552.5" y="365.5" width="38" height="13" fill="#fff" stroke="#0000ff"/>
<text x="571.7" y="376" fill="#0000ff" font-size="11" text-anchor="middle" stroke="none" textLength="35" lengthAdjust="spacingAndGlyphs">1.984m</text>
<rect x="696.5" y="365.5" width="38" height="13" fill="#fff" stroke="#0000ff"/>
<text x="715.7" y="376" fill="#0000ff" font-size="11" text-anchor="middle" stroke="none" textLength="35" lengthAdjust="spacingAndGlyphs">2.032m</text>
<rect x="73.5" y="422.5" width="48" height="13" fill="#fff" stroke="#0000ff"/>
<text x="97.7" y="433" fill="#0000ff" font-size="11" text-anchor="middle" stroke="none" textLength="44" lengthAdjust="spacingAndGlyphs">382.268n</text>
<rect x="261.5" y="528.5" width="45" height="13" fill="#fff" stroke="#0000ff"/>
<text x="284.2" y="539" fill="#0000ff" font-size="11" text-anchor="middle" stroke="none" textLength="41" lengthAdjust="spacingAndGlyphs">15.664m</text>
<rect x="193.5" y="543.5" width="42" height="13" fill="#fff" stroke="#0000ff"/>
<text x="214.7" y="554" fill="#0000ff" font-size="11" text-anchor="middle" stroke="none" textLength="38" lengthAdjust="spacingAndGlyphs">34.645u</text>
<rect x="246.5" y="582.5" width="45" height="13" fill="#fff" stroke="#0000ff"/>
<text x="269.2" y="593" fill="#0000ff" font-size="11" text-anchor="middle" stroke="none" textLength="41" lengthAdjust="spacingAndGlyphs">15.699m</text>
<rect x="312.5" y="517.5" width="38" height="13" fill="#fff" stroke="#0000ff"/>
<text x="331.7" y="528" fill="#0000ff" font-size="11" text-anchor="middle" stroke="none" textLength="35" lengthAdjust="spacingAndGlyphs">7.389m</text>
<rect x="384.5" y="517.5" width="38" height="13" fill="#fff" stroke="#0000ff"/>
<text x="403.7" y="528" fill="#0000ff" font-size="11" text-anchor="middle" stroke="none" textLength="35" lengthAdjust="spacingAndGlyphs">7.391m</text>
<rect x="352.5" y="565.5" width="38" height="13" fill="#fff" stroke="#0000ff"/>
<text x="371.7" y="576" fill="#0000ff" font-size="11" text-anchor="middle" stroke="none" textLength="35" lengthAdjust="spacingAndGlyphs">14.78m</text>
<rect x="484.5" y="507.5" width="42" height="13" fill="#fff" stroke="#0000ff"/>
<text x="505.7" y="518" fill="#0000ff" font-size="11" text-anchor="middle" stroke="none" textLength="38" lengthAdjust="spacingAndGlyphs">21.957u</text>
<rect x="537.5" y="556.5" width="48" height="13" fill="#fff" stroke="#0000ff"/>
<text x="561.7" y="567" fill="#0000ff" font-size="11" text-anchor="middle" stroke="none" textLength="44" lengthAdjust="spacingAndGlyphs">133.436n</text>
<rect x="617.5" y="563.5" width="38" height="13" fill="#fff" stroke="#0000ff"/>
<text x="636.7" y="574" fill="#0000ff" font-size="11" text-anchor="middle" stroke="none" textLength="35" lengthAdjust="spacingAndGlyphs">5.153m</text>
<rect x="729.5" y="507.5" width="42" height="13" fill="#fff" stroke="#0000ff"/>
<text x="750.7" y="518" fill="#0000ff" font-size="11" text-anchor="middle" stroke="none" textLength="38" lengthAdjust="spacingAndGlyphs">22.262u</text>
<rect x="727.5" y="549.5" width="48" height="13" fill="#fff" stroke="#0000ff"/>
<text x="751.7" y="560" fill="#0000ff" font-size="11" text-anchor="middle" stroke="none" textLength="44" lengthAdjust="spacingAndGlyphs">148.747n</text>
<rect x="801.5" y="552.5" width="44" height="13" fill="#fff" stroke="#0000ff"/>
<text x="823.7" y="563" fill="#0000ff" font-size="11" text-anchor="middle" stroke="none" textLength="41" lengthAdjust="spacingAndGlyphs">52.418m</text>
<rect x="179.5" y="638.5" width="44" height="13" fill="#fff" stroke="#0000ff"/>
<text x="201.7" y="649" fill="#0000ff" font-size="11" text-anchor="middle" stroke="none" textLength="41" lengthAdjust="spacingAndGlyphs">15.699m</text>
<rect x="155.5" y="685.5" width="44" height="13" fill="#fff" stroke="#0000ff"/>
<text x="177.7" y="696" fill="#0000ff" font-size="11" text-anchor="middle" stroke="none" textLength="41" lengthAdjust="spacingAndGlyphs">15.699m</text>
</g>
<rect x="9" y="775" width="1590" height="17" fill="#f0f0f0"/>
<rect x="13" y="776" width="16" height="15" fill="#f0f0f0"/>
<path d="M13.5 790.5V776.5H28.5" stroke="#fff" fill="none"/>
<path d="M13.5 790.5H28.5V776.5" stroke="#505050" fill="none"/>
<path d="M14.5 789.5H27.5V777.5" stroke="#909090" fill="none"/>
<rect x="17.0" y="779.5" width="1.5" height="8" fill="#000"/><path d="M24.0 779.5v8l-5-4z" fill="#000"/>
<rect x="29" y="776" width="16" height="15" fill="#f0f0f0"/>
<path d="M29.5 790.5V776.5H44.5" stroke="#fff" fill="none"/>
<path d="M29.5 790.5H44.5V776.5" stroke="#505050" fill="none"/>
<path d="M30.5 789.5H43.5V777.5" stroke="#909090" fill="none"/>
<path d="M39.0 779.5v8l-5-4z" fill="#000"/>
<rect x="45" y="776" width="16" height="15" fill="#f0f0f0"/>
<path d="M45.5 790.5V776.5H60.5" stroke="#fff" fill="none"/>
<path d="M45.5 790.5H60.5V776.5" stroke="#505050" fill="none"/>
<path d="M46.5 789.5H59.5V777.5" stroke="#909090" fill="none"/>
<path d="M51.0 779.5v8l5-4z" fill="#000"/>
<rect x="61" y="776" width="16" height="15" fill="#f0f0f0"/>
<path d="M61.5 790.5V776.5H76.5" stroke="#fff" fill="none"/>
<path d="M61.5 790.5H76.5V776.5" stroke="#505050" fill="none"/>
<path d="M62.5 789.5H75.5V777.5" stroke="#909090" fill="none"/>
<rect x="71.5" y="779.5" width="1.5" height="8" fill="#000"/><path d="M66.0 779.5v8l5-4z" fill="#000"/>
<path d="M78 775l7 15.500h30l7.500-15.500z" fill="#fff"/>
<path d="M78.5 775.500l7 15h29.500l7-15H435.500M118 784l3.5 6.500h27l3-6.500M149.5 775.500l7 15h41l3-6.500M198 775.500l7 15h23.500l7-15" stroke="#000" fill="none"/>
<text x="100" y="786" fill="#000010" font-size="11.3" text-anchor="middle" stroke="none" font-weight="bold" textLength="26.5" lengthAdjust="spacingAndGlyphs">Main</text>
<text x="134.3" y="786" fill="#00003a" font-size="11.3" text-anchor="middle" stroke="none" textLength="19.5" lengthAdjust="spacingAndGlyphs">Text</text>
<text x="176" y="786" fill="#00003a" font-size="11.3" text-anchor="middle" stroke="none" textLength="32.5" lengthAdjust="spacingAndGlyphs">Models</text>
<text x="215.8" y="786" fill="#00003a" font-size="11.3" text-anchor="middle" stroke="none" textLength="17" lengthAdjust="spacingAndGlyphs">Info</text>
<rect x="435" y="775" width="2" height="16" fill="#000"/><rect x="439" y="775" width="1" height="16" fill="#000"/>
<rect x="441" y="775" width="1158" height="1" fill="#fff"/><rect x="441" y="790" width="1158" height="1" fill="#a0a0a0"/>
<rect x="456" y="776" width="1" height="14" fill="#a0a0a0"/><rect x="457" y="776" width="1" height="14" fill="#fff"/>
<path d="M449.5 780v8l-5-4z" fill="#000"/>
<rect x="1595" y="62" width="4" height="730" fill="#f4f4f4"/>
<rect x="1596" y="760" width="1" height="16" fill="#a0a0a0"/>
<path d="M985.5 797.500V41.500q0-7 7-7H1587.500q7 0 7 7V797.500z" fill="url(#gDist)" stroke="#000"/>
<rect x="986" y="35" width="608" height="31" fill="none"/>
<rect x="986" y="66" width="608" height="731" fill="#b9d1ea"/>
<path d="M986.5 796.500V42q0-6.5 6.500-6.500H1587" fill="none" stroke="#e6f4fb" stroke-opacity="0.900"/>
<path d="M1587 35.500q6.5 0 6.5 6.500V796.500H986" fill="none" stroke="#55e0f8"/>
<rect x="985" y="797" width="610" height="1" fill="#000"/>
<rect x="992" y="64" width="596" height="727" fill="none" stroke="#8fa9c6" stroke-width="1"/>
<rect x="993" y="65" width="594" height="725" fill="#f0f0f0"/>
<rect x="993" y="65" width="594" height="1" fill="#6f7e90"/>
<rect x="1586" y="66" width="1" height="724" fill="#fff"/><rect x="993" y="789" width="594" height="1" fill="#fff"/>
<rect x="995" y="45" width="16" height="16" fill="#000"/><rect x="996" y="46" width="14" height="3" fill="#0000ff"/><rect x="996" y="50" width="14" height="10" fill="#f0f0f0"/><rect x="998" y="52" width="10" height="6" fill="#00f0f0" stroke="#000" stroke-width="0.800"/><path d="M999 57q4-6 8 0" stroke="#000" fill="none" stroke-width="0.800"/>
<text x="1015" y="58" fill="#10101c" font-size="12.5" text-anchor="start" stroke="none" textLength="98" lengthAdjust="spacingAndGlyphs">Distortion Analysis</text>
<rect x="1485.5" y="44.5" width="31" height="17" rx="3" fill="url(#gBtnA)" stroke="#5c6f8a"/>
<rect x="1486.5" y="45.5" width="29" height="15" rx="2" fill="none" stroke="#ffffff" stroke-opacity="0.35"/>
<rect x="1495.5" y="52.5" width="11" height="4" rx="1" fill="#f4f4f4" stroke="#4d5366"/>
<rect x="1519.5" y="44.5" width="31" height="17" rx="3" fill="url(#gBtnA)" stroke="#5c6f8a"/>
<rect x="1520.5" y="45.5" width="29" height="15" rx="2" fill="none" stroke="#ffffff" stroke-opacity="0.35"/>
<rect x="1529.5" y="48.5" width="11" height="9" rx="1" fill="#f4f4f4" stroke="#4d5366"/>
<rect x="1532.5" y="51.5" width="5" height="3" fill="none" stroke="#4d5366"/>
<rect x="1553.5" y="44.5" width="32" height="17" rx="3" fill="url(#gBtnR)" stroke="#4f1418"/>
<rect x="1554.5" y="45.5" width="30" height="15" rx="2" fill="none" stroke="#ffffff" stroke-opacity="0.35"/>
<path d="M1564.5 48.5h3.2l1.8 2.4 1.8 -2.4h3.2l-3.4 4.5 3.4 4.5h-3.2l-1.8 -2.4 -1.8 2.4h-3.2l3.4 -4.5z" fill="#f6f6f6" stroke="#4d5366" stroke-width="1" stroke-linejoin="round"/>
<rect x="999" y="93" width="583" height="1" fill="#a0a0a0"/><rect x="999" y="94" width="583" height="1" fill="#fff"/>
<rect x="999" y="119" width="583" height="1" fill="#a0a0a0"/><rect x="999" y="120" width="583" height="1" fill="#fff"/>
<g transform="translate(1003,74)" ><path d="M0 0v11l2.6-2.4 2 4.4 2-0.9-2-4.3h3.6z" fill="#000"/></g>
<g transform="translate(1022,73)" ><g fill="none" stroke="#000"><path d="M1 6L6 0.5"/><rect x="9.5" y="1.5" width="5" height="5"/><path d="M3.5 9.5l3 3-3 3-3-3z"/><circle cx="12" cy="12.5" r="3"/></g></g>
<path d="M1046 79h7l-3.5 4z" fill="#000"/>
<rect x="1057" y="70" width="23" height="21" fill="url(#dith)"/>
<path d="M1057.5 90.5V70.5H1079.5" stroke="#a0a0a0" fill="none"/>
<path d="M1057.5 90.5H1079.5V70.5" stroke="#ffffff" fill="none"/>
<g fill="#000"><rect x="1061" y="75" width="1" height="1"/><rect x="1063" y="75" width="1" height="1"/><rect x="1065" y="75" width="1" height="1"/><rect x="1067" y="75" width="1" height="1"/><rect x="1069" y="75" width="1" height="1"/><rect x="1071" y="75" width="1" height="1"/><rect x="1073" y="75" width="1" height="1"/></g>
<g fill="#000"><rect x="1061" y="83" width="1" height="1"/><rect x="1063" y="83" width="1" height="1"/><rect x="1065" y="83" width="1" height="1"/><rect x="1067" y="83" width="1" height="1"/><rect x="1069" y="83" width="1" height="1"/><rect x="1071" y="83" width="1" height="1"/><rect x="1073" y="83" width="1" height="1"/></g>
<g fill="#000"><rect x="1061" y="75" width="1" height="1"/><rect x="1061" y="77" width="1" height="1"/><rect x="1061" y="79" width="1" height="1"/><rect x="1061" y="81" width="1" height="1"/><rect x="1061" y="83" width="1" height="1"/></g>
<g fill="#000"><rect x="1073" y="75" width="1" height="1"/><rect x="1073" y="77" width="1" height="1"/><rect x="1073" y="79" width="1" height="1"/><rect x="1073" y="81" width="1" height="1"/><rect x="1073" y="83" width="1" height="1"/></g>
<path d="M1061 85.500q3 0 5 1.500t4-5.5 4-4 3 4" stroke="#0000c0" fill="none" stroke-width="1.700"/>
<path d="M1083.5 78q2-5 4-2.500t4 4.5 3.500-4 3.5 4" stroke="#0000c0" fill="none" stroke-width="1.700"/>
<g fill="#000"><rect x="1087" y="77" width="1" height="1"/><rect x="1087" y="79" width="1" height="1"/><rect x="1087" y="81" width="1" height="1"/></g>
<g fill="#000"><rect x="1095" y="77" width="1" height="1"/><rect x="1095" y="79" width="1" height="1"/><rect x="1095" y="81" width="1" height="1"/></g>
<rect x="1083" y="83" width="16" height="2" fill="#000"/><path d="M1085.5 86.500h4M1092.5 86.500h4M1085.5 88.500h4M1092.5 88.500h4" stroke="#000" fill="none"/>
<path d="M1106 74.500h3v3h11v-3h3" stroke="#0000c0" fill="none" stroke-width="1.700"/>
<g fill="#000"><rect x="1109" y="79" width="1" height="1"/><rect x="1109" y="81" width="1" height="1"/><rect x="1109" y="83" width="1" height="1"/><rect x="1109" y="85" width="1" height="1"/></g>
<g fill="#000"><rect x="1120" y="79" width="1" height="1"/><rect x="1120" y="81" width="1" height="1"/><rect x="1120" y="83" width="1" height="1"/><rect x="1120" y="85" width="1" height="1"/></g>
<path d="M1108 86.500h3M1118 86.500h3M1112.5 84v5M1116.5 84v5M1112 86.500h5" stroke="#000" fill="none"/><path d="M1110 85v3l-2.500-1.500zM1119 85v3l2.500-1.500z" fill="#000"/>
<g fill="#000"><rect x="1133" y="73" width="1" height="1"/><rect x="1135" y="73" width="1" height="1"/><rect x="1137" y="73" width="1" height="1"/><rect x="1139" y="73" width="1" height="1"/></g>
<g fill="#000"><rect x="1131" y="75" width="1" height="1"/><rect x="1131" y="77" width="1" height="1"/></g>
<g fill="#000"><rect x="1131" y="84" width="1" height="1"/><rect x="1131" y="86" width="1" height="1"/></g>
<g fill="#000"><rect x="1133" y="87" width="1" height="1"/><rect x="1135" y="87" width="1" height="1"/><rect x="1137" y="87" width="1" height="1"/></g>
<path d="M1129.5 75l2-2.5 2 2.500zM1129.5 86l2 2.5 2-2.500z" fill="#000"/><path d="M1130.5 79v4" stroke="#000"/><rect x="1132.5" y="79.5" width="2" height="3" fill="none" stroke="#000"/>
<path d="M1137.5 88q2-1 3-7t2.500-7 2 2" stroke="#0000c0" fill="none" stroke-width="1.700"/>
<path d="M1152 84.500h5v3.500h5v-3.500h6.5" stroke="#0000c0" fill="none" stroke-width="1.700"/>
<path d="M1161 79.500h7.500M1164 80l-6 4.5" stroke="#000" fill="none"/><path d="M1157 85l1-3.5 2.5 2.500z" fill="#000"/>
<text x="1160" y="78" fill="#000" font-size="7" text-anchor="start" stroke="none" font-weight="bold" textLength="8.5" lengthAdjust="spacingAndGlyphs">1.0</text>
<text x="1178" y="78.5" fill="#900010" font-size="7.5" text-anchor="start" stroke="none" font-weight="bold" textLength="10" lengthAdjust="spacingAndGlyphs">F()</text>
<g fill="#000"><rect x="1176" y="76" width="1" height="1"/><rect x="1176" y="78" width="1" height="1"/><rect x="1176" y="80" width="1" height="1"/><rect x="1176" y="82" width="1" height="1"/><rect x="1176" y="84" width="1" height="1"/><rect x="1176" y="86" width="1" height="1"/><rect x="1176" y="88" width="1" height="1"/></g>
<g fill="#000"><rect x="1190" y="76" width="1" height="1"/><rect x="1190" y="78" width="1" height="1"/><rect x="1190" y="80" width="1" height="1"/><rect x="1190" y="82" width="1" height="1"/><rect x="1190" y="84" width="1" height="1"/><rect x="1190" y="86" width="1" height="1"/><rect x="1190" y="88" width="1" height="1"/></g>
<path d="M1174.5 79.500h4l-2 4zM1188.5 79.500h4l-2 4z" fill="#000"/>
<path d="M1177 87.500q3-5 6.500-5t6.5 5" stroke="#0000c0" fill="none" stroke-width="1.700"/>
<g transform="translate(1199,74)" ><path d="M0 0h14v4h-1l-1-2h-3.5v9.500l2 1v1.500h-7v-1.500l2-1v-9.500h-3.500l-1 2h-1z" fill="#000"/></g>
<rect x="1220" y="72" width="1" height="17" fill="#a0a0a0"/><rect x="1221" y="72" width="1" height="17" fill="#fff"/>
<g transform="translate(1226,72)" ><g stroke="#000" fill="none"><path d="M1.5 15.500v-10h3l3-3.5 4 3.500h1v10z" fill="#fff"/><path d="M3 9.500h8M3 11.500h8M3 13.500h8"/><path d="M6 4.500l2-2.5 3 2.5" stroke-dasharray="1 1"/><path d="M9 2.500l4.500-1.5" /><rect x="13.5" y="0.5" width="2" height="6" fill="#00008b" stroke="#00008b"/></g></g>
<rect x="1248" y="72" width="1" height="17" fill="#a0a0a0"/><rect x="1249" y="72" width="1" height="17" fill="#fff"/>
<path d="M1256 75v11.500l12-5.750z" fill="#000"/>
<rect x="1279" y="75" width="12" height="11" fill="#a0a0a0"/>
<rect x="1303" y="75" width="4" height="11" fill="#a0a0a0"/><rect x="1310" y="75" width="4" height="11" fill="#a0a0a0"/>
<rect x="1322" y="72" width="1" height="17" fill="#a0a0a0"/><rect x="1323" y="72" width="1" height="17" fill="#fff"/>
<path d="M1328 87.500l10-10.500h6" stroke="#000" fill="none"/><circle cx="1333.5" cy="82" r="1.5" fill="#000"/>
<path d="M1353 86l11-11" stroke="#000" fill="none"/><rect x="1351.5" y="84.5" width="3" height="3" fill="#fff" stroke="#000"/><rect x="1357" y="79" width="3" height="3" fill="#fff" stroke="#000"/><rect x="1362.5" y="73.5" width="3" height="3" fill="#fff" stroke="#000"/>
<rect x="1373" y="72" width="1" height="17" fill="#a0a0a0"/><rect x="1374" y="72" width="1" height="17" fill="#fff"/>
<rect x="1380" y="74" width="14" height="13" fill="#fff" stroke="#000" stroke-width="2"/><rect x="1381.5" y="75.5" width="11" height="10" fill="none" stroke="#000" stroke-dasharray="1 1"/>
<rect x="1402.5" y="73.5" width="15" height="14" fill="#fff" stroke="#000" stroke-width="1.300"/><path d="M1407.5 74v13M1412.5 74v13M1403 78.500h14M1403 83.500h14" stroke="#000" stroke-dasharray="2 1" fill="none"/>
<rect x="1424" y="72" width="1" height="17" fill="#a0a0a0"/><rect x="1425" y="72" width="1" height="17" fill="#fff"/>
<rect x="1427" y="70" width="22" height="21" fill="url(#dith)"/>
<path d="M1427.5 90.5V70.5H1448.5" stroke="#a0a0a0" fill="none"/>
<path d="M1427.5 90.5H1448.5V70.5" stroke="#ffffff" fill="none"/>
<rect x="1449" y="70" width="23" height="21" fill="url(#dith)"/>
<path d="M1449.5 90.5V70.5H1471.5" stroke="#a0a0a0" fill="none"/>
<path d="M1449.5 90.5H1471.5V70.5" stroke="#ffffff" fill="none"/>
<rect x="1472" y="70" width="23" height="21" fill="url(#dith)"/>
<path d="M1472.5 90.5V70.5H1494.5" stroke="#a0a0a0" fill="none"/>
<path d="M1472.5 90.5H1494.5V70.5" stroke="#ffffff" fill="none"/>
<rect x="1431.5" y="73.5" width="14" height="14" fill="#fff" stroke="#000" stroke-width="1.300"/><rect x="1433" y="74" width="1" height="13" fill="#000"/><rect x="1435" y="74" width="1" height="13" fill="#000"/><rect x="1437" y="74" width="1" height="13" fill="#000"/><rect x="1439" y="74" width="1" height="13" fill="#000"/><rect x="1441" y="74" width="1" height="13" fill="#000"/><rect x="1443" y="74" width="1" height="13" fill="#000"/>
<rect x="1454.5" y="73.5" width="14" height="14" fill="#fff" stroke="#000" stroke-width="1.300"/><rect x="1455" y="75" width="13" height="1" fill="#000"/><rect x="1455" y="77" width="13" height="1" fill="#000"/><rect x="1455" y="79" width="13" height="1" fill="#000"/><rect x="1455" y="81" width="13" height="1" fill="#000"/><rect x="1455" y="83" width="13" height="1" fill="#000"/><rect x="1455" y="85" width="13" height="1" fill="#000"/>
<rect x="1477.5" y="73.5" width="14" height="14" fill="#fff" stroke="#000" stroke-width="1.300"/><path d="M1483.5 75v12M1485.5 75v12M1487.5 75v12M1489.5 75v12" stroke="#000" stroke-dasharray="1 1" fill="none"/>
<rect x="1499.5" y="73.5" width="15" height="14" fill="#fff" stroke="#000" stroke-width="1.300"/><path d="M1504.5 75v12M1509.5 75v12" stroke="#000" stroke-dasharray="1 1" fill="none"/>
<rect x="1521" y="72" width="1" height="17" fill="#a0a0a0"/><rect x="1522" y="72" width="1" height="17" fill="#fff"/>
<rect x="1527.5" y="73.5" width="15" height="14" fill="#fff" stroke="#000" stroke-width="1.300"/><path d="M1528 83.500h14" stroke="#000"/>
<path d="M1557.5 73v15M1550 81.500h16" stroke="#000" stroke-dasharray="2 1" fill="none"/><path d="M1550 84l15-8" stroke="#0000ff" fill="none" stroke-width="1.200"/>
<rect x="1572" y="72" width="1" height="17" fill="#a0a0a0"/><rect x="1573" y="72" width="1" height="17" fill="#fff"/>
<path d="M1008.5 99v15" stroke="#000" stroke-dasharray="1 1" fill="none"/><path d="M1002 113q6-2 7-7t5-7" stroke="#0000ff" fill="none" stroke-width="1.200"/><path d="M1001 106.500h6" stroke="#000"/><path d="M1005 104l3 2.500-3 2.500z" fill="#000"/>
<path d="M1030.5 99v15" stroke="#000" stroke-dasharray="1 1" fill="none"/><path d="M1022 111q6 0 9-3t7-4" stroke="#0000ff" fill="none" stroke-width="1.200"/><path d="M1030.5 100v6" stroke="#000"/><path d="M1028 105h5l-2.5 4z" fill="#000"/>
<path d="M1052.5 99v15M1057.5 99v15" stroke="#000" stroke-dasharray="1 1" fill="none"/><path d="M1045 111q6 0 9-3t7-4" stroke="#0000ff" fill="none" stroke-width="1.200"/><path d="M1050 104h5l-2.5 4zM1055 104h5l-2.5 4z" fill="#000"/>
<path d="M1068 101.500h5l7 6h4M1068 103.500h5l7 6h4M1068 105.500h5l7 6h4" stroke="#b0b0b0" fill="none"/>
<rect x="1090" y="98" width="1" height="17" fill="#a0a0a0"/><rect x="1091" y="98" width="1" height="17" fill="#fff"/>
<rect x="1096.5" y="100.5" width="15" height="13" fill="#fff" stroke="#0000c0" stroke-width="1.300"/><path d="M1098 106l3-3 3 2 3-2 3 1" stroke="#0000ff" fill="none"/><path d="M1098 110q3 3 6 0t6 0" stroke="#ff0000" fill="none"/><path d="M1100 110l7-7h3l-6 7z" fill="#fff" stroke="#000"/>
<rect x="1118" y="98" width="1" height="17" fill="#a0a0a0"/><rect x="1119" y="98" width="1" height="17" fill="#fff"/>
<rect x="1121" y="96" width="23" height="21" fill="url(#dith)"/>
<path d="M1121.5 116.5V96.5H1143.5" stroke="#a0a0a0" fill="none"/>
<path d="M1121.5 116.5H1143.5V96.5" stroke="#ffffff" fill="none"/>
<path d="M1132.5 99v15" stroke="#000" stroke-dasharray="1 1" fill="none"/><path d="M1125 106.500h15" stroke="#0000ff" fill="none" stroke-width="1.300"/><rect x="1125" y="105" width="3" height="3" fill="#0000ff"/><rect x="1131" y="105" width="3" height="3" fill="#0000ff"/><rect x="1137" y="105" width="3" height="3" fill="#0000ff"/>
<path d="M1155.5 99v15" stroke="#000" stroke-dasharray="1 1" fill="none"/><path d="M1148 106.500h15" stroke="#0000ff" fill="none" stroke-width="1.300"/><rect x="1148" y="105" width="3" height="3" fill="#0000ff"/><rect x="1160" y="105" width="3" height="3" fill="#0000ff"/>
<path d="M1178.5 100v14" stroke="#000" stroke-dasharray="1 1" fill="none"/><path d="M1171 113q4-2 5-9t2.500-4.5 2.5 4.5 5 9" stroke="#0000ff" fill="none" stroke-width="1.200"/>
<path d="M1201.5 100v14" stroke="#000" stroke-dasharray="1 1" fill="none"/><path d="M1194 100q3 1 4 8t3.5 5 3.500-5 3-8" stroke="#0000ff" fill="none" stroke-width="1.200"/>
<path d="M1227.5 100v14" stroke="#000" stroke-dasharray="1 1" fill="none"/><path d="M1217 110q2-4 4 0t3 0 3.500-8 4.5 9" stroke="#0000ff" fill="none" stroke-width="1.200"/>
<path d="M1250.5 100v14" stroke="#000" stroke-dasharray="1 1" fill="none"/><path d="M1240 104q2-4 4-1t3 0 3.5 8 4.500-9" stroke="#0000ff" fill="none" stroke-width="1.200"/>
<path d="M1269.5 99v15" stroke="#000" stroke-dasharray="1 1" fill="none"/><path d="M1262 113.500h2l13-14" stroke="#0000ff" fill="none" stroke-width="1.200"/>
<path d="M1292.5 100v14" stroke="#000" stroke-dasharray="1 1" fill="none"/><path d="M1285 111q5-12 8-10t8 7M1289 113q2-8 4-9t5 8" stroke="#0000ff" fill="none" stroke-width="1.200"/>
<path d="M1315.5 100v14" stroke="#000" stroke-dasharray="1 1" fill="none"/><path d="M1308 102q4 12 8 10t7-10M1311 101q3 8 5 8t4-7" stroke="#0000ff" fill="none" stroke-width="1.200"/>
<path d="M1339.5 99v15" stroke="#000" stroke-dasharray="1 1" fill="none"/><path d="M1331 101q8 10 16 0M1331 104q8 10 16 0M1331 107q8 9 16 0" stroke="#0000ff" fill="none" stroke-width="1.200"/><circle cx="1339.5" cy="111.5" r="1.800" fill="#0000ff"/>
<path d="M1362.5 99v15" stroke="#000" stroke-dasharray="1 1" fill="none"/><path d="M1354 107q8-10 16 0M1354 110q8-10 16 0M1354 113q8-9 16 0" stroke="#0000ff" fill="none" stroke-width="1.200"/><circle cx="1362.5" cy="102" r="1.800" fill="#0000ff"/>
<rect x="1376" y="98" width="1" height="17" fill="#a0a0a0"/><rect x="1377" y="98" width="1" height="17" fill="#fff"/>
<path d="M1382 104.500l4-2h12v8l-4 3.500h-12z" fill="#e8e800" stroke="#000"/><path d="M1382 104.500h12l4-2M1394 104.500v9.5" stroke="#000" fill="none"/><rect x="1387" y="106" width="3" height="3" fill="#000"/><path d="M1384 103l2-4 3 2z" fill="#2040ff"/><rect x="1388" y="98" width="4" height="5" fill="#ff2020"/><rect x="1391" y="99" width="3" height="4" fill="#fff" stroke="#2040ff" stroke-width="0.600"/>
<path d="M1406 105h7l-3.5 4z" fill="#000"/>
<rect x="1419" y="98" width="1" height="17" fill="#a0a0a0"/><rect x="1420" y="98" width="1" height="17" fill="#fff"/>
<rect x="1425.5" y="99.5" width="15" height="14" fill="#fff" stroke="#000" stroke-width="1.300"/><rect x="1427" y="102" width="12" height="1" fill="#000"/><rect x="1427" y="104" width="12" height="1" fill="#000"/><rect x="1427" y="106" width="12" height="1" fill="#000"/><rect x="1427" y="108" width="12" height="1" fill="#000"/><rect x="1427" y="110" width="12" height="1" fill="#000"/><rect x="1427" y="112" width="12" height="1" fill="#000"/><rect x="1430" y="100" width="1" height="13" fill="#fff"/><rect x="1435" y="100" width="1" height="13" fill="#fff"/>
<rect x="1447" y="98" width="1" height="17" fill="#a0a0a0"/><rect x="1448" y="98" width="1" height="17" fill="#fff"/>
<text x="1452.5" y="113.5" font-size="19.5" fill="#000" stroke="#000" stroke-width="0.450" textLength="16.800" lengthAdjust="spacingAndGlyphs">&#39;P&#39;</text>
<rect x="1475" y="98" width="1" height="17" fill="#a0a0a0"/><rect x="1476" y="98" width="1" height="17" fill="#fff"/>
<rect x="1478" y="96" width="22" height="21" fill="url(#dith)"/>
<path d="M1478.5 116.5V96.5H1499.5" stroke="#a0a0a0" fill="none"/>
<path d="M1478.5 116.5H1499.5V96.5" stroke="#ffffff" fill="none"/>
<rect x="1500" y="96" width="23" height="21" fill="url(#dith)"/>
<path d="M1500.5 116.5V96.5H1522.5" stroke="#a0a0a0" fill="none"/>
<path d="M1500.5 116.5H1522.5V96.5" stroke="#ffffff" fill="none"/>
<text x="1482" y="106" fill="#a00018" font-size="9.5" text-anchor="start" stroke="none" font-weight="bold">X</text>
<path d="M1491.5 105v8" stroke="#000" stroke-width="1.4" fill="none"/><path d="M1488 114.500l3.500-3 3.5 3z" fill="#000"/>
<path d="M1485.5 110q6-6 12 0" stroke="#000" fill="none" stroke-width="1.100"/>
<path d="M1483 111.500h5M1495 111.500h5" stroke="#d8c000" stroke-width="1.600" fill="none"/><path d="M1485.5 108.500l-2 2.500M1485.5 108.500l2 2.500M1497.5 108.500l-2 2.500M1497.5 108.500l2 2.5" stroke="#000" stroke-width="0.800" fill="none"/>
<text x="1504" y="106" fill="#a00018" font-size="9.5" text-anchor="start" stroke="none" font-weight="bold">Y</text>
<path d="M1513.5 105v8" stroke="#000" stroke-width="1.4" fill="none"/><path d="M1510 114.500l3.500-3 3.5 3z" fill="#000"/>
<path d="M1507.5 110q6-6 12 0" stroke="#000" fill="none" stroke-width="1.100"/>
<path d="M1505 111.500h5M1517 111.500h5" stroke="#d8c000" stroke-width="1.600" fill="none"/><path d="M1507.5 108.500l-2 2.500M1507.5 108.500l2 2.500M1519.5 108.500l-2 2.500M1519.5 108.500l2 2.5" stroke="#000" stroke-width="0.800" fill="none"/>
<rect x="1526" y="98" width="1" height="17" fill="#a0a0a0"/><rect x="1527" y="98" width="1" height="17" fill="#fff"/>
<circle cx="1006" cy="132" r="5" fill="#fff" stroke="#000" stroke-width="1.600"/><path d="M1010 136l5 5" stroke="#000" stroke-width="2.200"/><path d="M1003.5 132h5M1006 129.500v5" stroke="#000" stroke-width="1.5"/>
<circle cx="1029" cy="132" r="5" fill="#fff" stroke="#000" stroke-width="1.600"/><path d="M1033 136l5 5" stroke="#000" stroke-width="2.200"/><path d="M1026.5 132h5" stroke="#000" stroke-width="1.5"/>
<circle cx="1052" cy="132" r="5" fill="#fff" stroke="#000" stroke-width="1.600"/><path d="M1056 136l5 5" stroke="#000" stroke-width="2.200"/><rect x="1047.5" y="129.5" width="9" height="5" fill="#fff" stroke="#0000c0"/><path d="M1049 133l2-2 2 2 2-2" stroke="#ff0000" fill="none"/>
<rect x="1067" y="124" width="1" height="17" fill="#a0a0a0"/><rect x="1068" y="124" width="1" height="17" fill="#fff"/>
<circle cx="1081" cy="132.5" r="6.5" fill="#d0d0d0" stroke="#b0b0b0"/><path d="M1075 131h12M1081 126v13M1077 128q4 4 0 9M1085 128q-4 4 0 9" stroke="#f0f0f0" fill="none"/>
<text x="1097" y="139" fill="#000" font-size="20" text-anchor="start" stroke="none" font-weight="bold" font-family="Liberation Serif" textLength="13.5" lengthAdjust="spacingAndGlyphs">F</text>
<rect x="993" y="149" width="594" height="1" fill="#a0a0a0"/><rect x="993" y="150" width="594" height="1" fill="#696969"/>
<rect x="993" y="149" width="1" height="622" fill="#a0a0a0"/><rect x="994" y="150" width="1" height="621" fill="#696969"/>
<rect x="995" y="151" width="591" height="620" fill="#fff"/>
<text x="1298.5" y="161" fill="#0000ff" font-size="10" text-anchor="middle" stroke="none" textLength="110" lengthAdjust="spacingAndGlyphs">PP6P41S_6N23P_1.cir</text>
<path d="M1096.5 165V320M1154.5 165V320M1211.5 165V320M1269.5 165V320M1327.5 165V320M1385.5 165V320M1442.5 165V320M1500.5 165V320M1039 195.5H1558M1039 226.5H1558M1039 258.5H1558M1039 289.5H1558" stroke="#5a5a5a" stroke-dasharray="3 3" fill="none" shape-rendering="crispEdges"/>
<rect x="1038.5" y="164.5" width="520" height="156" fill="none" stroke="#808080" shape-rendering="crispEdges"/>
<rect x="1236" y="167" width="165" height="14" fill="#fff"/>
<text x="1318.5" y="177" fill="#0000ff" font-size="10" text-anchor="middle" stroke="none" textLength="163" lengthAdjust="spacingAndGlyphs">Amplitude of V(OUT) vs Frequency</text>
<text transform="translate(1035.3,168.0) scale(1.067,1)" fill="#0000ff" font-size="10" text-anchor="end" stroke="none" >25.000</text>
<text transform="translate(1035.3,199.2) scale(1.067,1)" fill="#0000ff" font-size="10" text-anchor="end" stroke="none" >20.000</text>
<text transform="translate(1035.3,230.4) scale(1.067,1)" fill="#0000ff" font-size="10" text-anchor="end" stroke="none" >15.000</text>
<text transform="translate(1035.3,261.6) scale(1.067,1)" fill="#0000ff" font-size="10" text-anchor="end" stroke="none" >10.000</text>
<text transform="translate(1035.3,292.8) scale(1.067,1)" fill="#0000ff" font-size="10" text-anchor="end" stroke="none" >5.000</text>
<text transform="translate(1035.3,324.0) scale(1.067,1)" fill="#0000ff" font-size="10" text-anchor="end" stroke="none" >0.000</text>
<text transform="translate(1038.5,330.6) scale(1.067,1)" fill="#0000ff" font-size="10" text-anchor="start" stroke="none" >1.000K</text>
<text transform="translate(1096.4777777777779,330.6) scale(1.067,1)" fill="#0000ff" font-size="10" text-anchor="middle" stroke="none" >2.000K</text>
<text transform="translate(1154.2555555555557,330.6) scale(1.067,1)" fill="#0000ff" font-size="10" text-anchor="middle" stroke="none" >3.000K</text>
<text transform="translate(1212.0333333333333,330.6) scale(1.067,1)" fill="#0000ff" font-size="10" text-anchor="middle" stroke="none" >4.000K</text>
<text transform="translate(1269.8111111111111,330.6) scale(1.067,1)" fill="#0000ff" font-size="10" text-anchor="middle" stroke="none" >5.000K</text>
<text transform="translate(1327.588888888889,330.6) scale(1.067,1)" fill="#0000ff" font-size="10" text-anchor="middle" stroke="none" >6.000K</text>
<text transform="translate(1385.3666666666668,330.6) scale(1.067,1)" fill="#0000ff" font-size="10" text-anchor="middle" stroke="none" >7.000K</text>
<text transform="translate(1443.1444444444444,330.6) scale(1.067,1)" fill="#0000ff" font-size="10" text-anchor="middle" stroke="none" >8.000K</text>
<text transform="translate(1500.9222222222222,330.6) scale(1.067,1)" fill="#0000ff" font-size="10" text-anchor="middle" stroke="none" >9.000K</text>
<text transform="translate(1558.7,330.6) scale(1.067,1)" fill="#0000ff" font-size="10" text-anchor="middle" stroke="none" >10.000K</text>
<text x="1038.5" y="344" fill="#0000ff" font-size="10" text-anchor="start" stroke="none" textLength="70.5" lengthAdjust="spacingAndGlyphs">HARM(V(OUT))</text>
<rect x="1038" y="345" width="71" height="1" fill="#0000ff"/>
<text x="1233.5" y="357" fill="#0000ff" font-size="10" text-anchor="start" stroke="none" textLength="26.5" lengthAdjust="spacingAndGlyphs">F (Hz)</text>
<g>
<rect x="1038" y="209" width="1" height="111" fill="#0000ff"/>
<rect x="1038" y="206" width="4" height="6" fill="#0000ff"/>
<rect x="1093" y="317" width="6" height="3" fill="#0000ff"/>
<rect x="1151" y="314" width="6" height="6" fill="#0000ff"/>
<rect x="1208" y="317" width="6" height="3" fill="#0000ff"/>
<rect x="1266" y="316" width="6" height="4" fill="#0000ff"/>
<rect x="1324" y="317" width="6" height="3" fill="#0000ff"/>
<rect x="1382" y="317" width="6" height="3" fill="#0000ff"/>
<rect x="1439" y="317" width="6" height="3" fill="#0000ff"/>
<rect x="1497" y="317" width="6" height="3" fill="#0000ff"/>
<rect x="1555" y="318" width="3" height="2" fill="#0000ff"/>
</g>
<path d="M1096.5 368V523M1154.5 368V523M1211.5 368V523M1269.5 368V523M1327.5 368V523M1385.5 368V523M1442.5 368V523M1500.5 368V523M1039 398.5H1558M1039 429.5H1558M1039 461.5H1558M1039 492.5H1558" stroke="#5a5a5a" stroke-dasharray="3 3" fill="none" shape-rendering="crispEdges"/>
<rect x="1038.5" y="367.5" width="520" height="156" fill="none" stroke="#808080" shape-rendering="crispEdges"/>
<rect x="1223" y="370" width="199" height="14" fill="#fff"/>
<text x="1322.6" y="380" fill="#0000ff" font-size="10" text-anchor="middle" stroke="none" textLength="196.5" lengthAdjust="spacingAndGlyphs">Percent Distortion of V(OUT) vs Frequency</text>
<text transform="translate(1035.3,371.0) scale(1.067,1)" fill="#0000ff" font-size="10" text-anchor="end" stroke="none" >3.750</text>
<text transform="translate(1035.3,402.2) scale(1.067,1)" fill="#0000ff" font-size="10" text-anchor="end" stroke="none" >3.000</text>
<text transform="translate(1035.3,433.4) scale(1.067,1)" fill="#0000ff" font-size="10" text-anchor="end" stroke="none" >2.250</text>
<text transform="translate(1035.3,464.6) scale(1.067,1)" fill="#0000ff" font-size="10" text-anchor="end" stroke="none" >1.500</text>
<text transform="translate(1035.3,495.8) scale(1.067,1)" fill="#0000ff" font-size="10" text-anchor="end" stroke="none" >0.750</text>
<text transform="translate(1035.3,527.0) scale(1.067,1)" fill="#0000ff" font-size="10" text-anchor="end" stroke="none" >0.000</text>
<text transform="translate(1038.5,533.6) scale(1.067,1)" fill="#0000ff" font-size="10" text-anchor="start" stroke="none" >1.000K</text>
<text transform="translate(1096.4777777777779,533.6) scale(1.067,1)" fill="#0000ff" font-size="10" text-anchor="middle" stroke="none" >2.000K</text>
<text transform="translate(1154.2555555555557,533.6) scale(1.067,1)" fill="#0000ff" font-size="10" text-anchor="middle" stroke="none" >3.000K</text>
<text transform="translate(1212.0333333333333,533.6) scale(1.067,1)" fill="#0000ff" font-size="10" text-anchor="middle" stroke="none" >4.000K</text>
<text transform="translate(1269.8111111111111,533.6) scale(1.067,1)" fill="#0000ff" font-size="10" text-anchor="middle" stroke="none" >5.000K</text>
<text transform="translate(1327.588888888889,533.6) scale(1.067,1)" fill="#0000ff" font-size="10" text-anchor="middle" stroke="none" >6.000K</text>
<text transform="translate(1385.3666666666668,533.6) scale(1.067,1)" fill="#0000ff" font-size="10" text-anchor="middle" stroke="none" >7.000K</text>
<text transform="translate(1443.1444444444444,533.6) scale(1.067,1)" fill="#0000ff" font-size="10" text-anchor="middle" stroke="none" >8.000K</text>
<text transform="translate(1500.9222222222222,533.6) scale(1.067,1)" fill="#0000ff" font-size="10" text-anchor="middle" stroke="none" >9.000K</text>
<text transform="translate(1558.7,533.6) scale(1.067,1)" fill="#0000ff" font-size="10" text-anchor="middle" stroke="none" >10.000K</text>
<text x="1038.5" y="547" fill="#ff0000" font-size="10" text-anchor="start" stroke="none" textLength="139" lengthAdjust="spacingAndGlyphs">IHD(HARM(V(OUT)),1000) (%)</text>
<text x="1233.5" y="560" fill="#0000ff" font-size="10" text-anchor="start" stroke="none" textLength="26.5" lengthAdjust="spacingAndGlyphs">F (Hz)</text>
<rect x="1038" y="520" width="4" height="4" fill="#ff0000"/>
<rect x="1093" y="518" width="6" height="6" fill="#ff0000"/>
<rect x="1154" y="421" width="1" height="102" fill="#ff0000"/>
<rect x="1151" y="418" width="6" height="6" fill="#ff0000"/>
<rect x="1208" y="518" width="6" height="6" fill="#ff0000"/>
<rect x="1269" y="497" width="1" height="26" fill="#ff0000"/>
<rect x="1266" y="494" width="6" height="6" fill="#ff0000"/>
<rect x="1324" y="519" width="6" height="5" fill="#ff0000"/>
<rect x="1385" y="516" width="1" height="7" fill="#ff0000"/>
<rect x="1382" y="513" width="6" height="6" fill="#ff0000"/>
<rect x="1439" y="520" width="6" height="4" fill="#ff0000"/>
<rect x="1497" y="519" width="6" height="5" fill="#ff0000"/>
<rect x="1555" y="520" width="4" height="4" fill="#ff0000"/>
<path d="M1142.5 571V726M1246.5 571V726M1350.5 571V726M1454.5 571V726M1039 601.5H1558M1039 632.5H1558M1039 664.5H1558M1039 695.5H1558" stroke="#5a5a5a" stroke-dasharray="3 3" fill="none" shape-rendering="crispEdges"/>
<rect x="1038.5" y="570.5" width="520" height="156" fill="none" stroke="#808080" shape-rendering="crispEdges"/>
<rect x="1238" y="574" width="158" height="14" fill="#fff"/>
<text x="1316.8" y="583" fill="#0000ff" font-size="10" text-anchor="middle" stroke="none" textLength="155" lengthAdjust="spacingAndGlyphs">Sampled Waveform  V(OUT) vs T</text>
<text transform="translate(1035.3,574.0) scale(1.067,1)" fill="#0000ff" font-size="10" text-anchor="end" stroke="none" >30.000</text>
<text transform="translate(1035.3,605.2) scale(1.067,1)" fill="#0000ff" font-size="10" text-anchor="end" stroke="none" >20.000</text>
<text transform="translate(1035.3,636.4) scale(1.067,1)" fill="#0000ff" font-size="10" text-anchor="end" stroke="none" >10.000</text>
<text transform="translate(1035.3,667.6) scale(1.067,1)" fill="#0000ff" font-size="10" text-anchor="end" stroke="none" >0.000</text>
<text transform="translate(1035.3,698.8) scale(1.067,1)" fill="#0000ff" font-size="10" text-anchor="end" stroke="none" >-10.000</text>
<text transform="translate(1035.3,730.0) scale(1.067,1)" fill="#0000ff" font-size="10" text-anchor="end" stroke="none" >-20.000</text>
<text transform="translate(1038.5,736.6) scale(1.067,1)" fill="#0000ff" font-size="10" text-anchor="start" stroke="none" >0.000m</text>
<text transform="translate(1142.7,736.6) scale(1.067,1)" fill="#0000ff" font-size="10" text-anchor="middle" stroke="none" >1.000m</text>
<text transform="translate(1246.7,736.6) scale(1.067,1)" fill="#0000ff" font-size="10" text-anchor="middle" stroke="none" >2.000m</text>
<text transform="translate(1350.7,736.6) scale(1.067,1)" fill="#0000ff" font-size="10" text-anchor="middle" stroke="none" >3.000m</text>
<text transform="translate(1454.7,736.6) scale(1.067,1)" fill="#0000ff" font-size="10" text-anchor="middle" stroke="none" >4.000m</text>
<text transform="translate(1558.7,736.6) scale(1.067,1)" fill="#0000ff" font-size="10" text-anchor="middle" stroke="none" >5.000m</text>
<text x="1038.5" y="750" fill="#ff00ff" font-size="10" text-anchor="start" stroke="none" textLength="51" lengthAdjust="spacingAndGlyphs">V(OUT) (V)</text>
<text x="1229" y="763" fill="#0000ff" font-size="10" text-anchor="start" stroke="none" textLength="37.5" lengthAdjust="spacingAndGlyphs">T (Secs)</text>
<polyline points="1454.5,661.6 1455.5,664.8 1456.5,668.1 1457.5,671.3 1458.5,674.5 1459.5,677.6 1460.5,680.7 1461.5,683.8 1462.5,686.7 1463.5,689.6 1464.5,692.4 1465.5,695.1 1466.5,697.7 1467.5,700.2 1468.5,702.5 1469.5,704.7 1470.5,706.7 1471.5,708.6 1472.5,710.3 1473.5,711.9 1474.5,713.2 1475.5,714.4 1476.5,715.5 1477.5,716.3 1478.5,716.9 1479.5,717.4 1480.5,717.6 1481.5,717.7 1482.5,717.6 1483.5,717.2 1484.5,716.7 1485.5,716.0 1486.5,715.1 1487.5,714.0 1488.5,712.7 1489.5,711.3 1490.5,709.6 1491.5,707.9 1492.5,705.9 1493.5,703.8 1494.5,701.6 1495.5,699.2 1496.5,696.7 1497.5,694.1 1498.5,691.3 1499.5,688.5 1500.5,685.6 1501.5,682.6 1502.5,679.5 1503.5,676.4 1504.5,673.2 1505.5,670.0 1506.5,666.8 1507.5,663.6 1508.5,660.3 1509.5,657.1 1510.5,653.9 1511.5,650.8 1512.5,647.7 1513.5,644.6 1514.5,641.7 1515.5,638.8 1516.5,636.0 1517.5,633.3 1518.5,630.7 1519.5,628.2 1520.5,625.9 1521.5,623.7 1522.5,621.7 1523.5,619.8 1524.5,618.1 1525.5,616.5 1526.5,615.2 1527.5,614.0 1528.5,612.9 1529.5,612.1 1530.5,611.5 1531.5,611.0 1532.5,610.8 1533.5,610.7 1534.5,610.8 1535.5,611.2 1536.5,611.7 1537.5,612.4 1538.5,613.3 1539.5,614.4 1540.5,615.7 1541.5,617.1 1542.5,618.8 1543.5,620.5 1544.5,622.5 1545.5,624.6 1546.5,626.8 1547.5,629.2 1548.5,631.7 1549.5,634.3 1550.5,637.1 1551.5,639.9 1552.5,642.8 1553.5,645.8 1554.5,648.9 1555.5,652.0 1556.5,655.2 1557.5,658.4 1558.5,661.6" stroke="#ff00ff" fill="none" stroke-width="1.350"/>
<rect x="995" y="771" width="591" height="18" fill="#f0f0f0"/>
<rect x="993" y="771" width="1" height="17" fill="#a0a0a0"/><rect x="994" y="771" width="1" height="16" fill="#696969"/>
<rect x="993" y="787" width="89" height="1" fill="#808080"/>
<rect x="1001" y="772" width="16" height="15" fill="#f0f0f0"/>
<path d="M1001.5 786.5V772.5H1016.5" stroke="#fff" fill="none"/>
<path d="M1001.5 786.5H1016.5V772.5" stroke="#505050" fill="none"/>
<path d="M1002.5 785.5H1015.5V773.5" stroke="#909090" fill="none"/>
<path d="M1006.0 779.5h6l-3 3z" fill="#000"/>
<rect x="1017" y="772" width="16" height="15" fill="#f0f0f0"/>
<path d="M1017.5 786.5V772.5H1032.5" stroke="#fff" fill="none"/>
<path d="M1017.5 786.5H1032.5V772.5" stroke="#505050" fill="none"/>
<path d="M1018.5 785.5H1031.5V773.5" stroke="#909090" fill="none"/>
<rect x="1021.0" y="775.5" width="1.5" height="8" fill="#000"/><path d="M1028.0 775.5v8l-5-4z" fill="#000"/>
<rect x="1033" y="772" width="16" height="15" fill="#f0f0f0"/>
<path d="M1033.5 786.5V772.5H1048.5" stroke="#fff" fill="none"/>
<path d="M1033.5 786.5H1048.5V772.5" stroke="#505050" fill="none"/>
<path d="M1034.5 785.5H1047.5V773.5" stroke="#909090" fill="none"/>
<path d="M1043.0 775.5v8l-5-4z" fill="#000"/>
<rect x="1049" y="772" width="16" height="15" fill="#f0f0f0"/>
<path d="M1049.5 786.5V772.5H1064.5" stroke="#fff" fill="none"/>
<path d="M1049.5 786.5H1064.5V772.5" stroke="#505050" fill="none"/>
<path d="M1050.5 785.5H1063.5V773.5" stroke="#909090" fill="none"/>
<path d="M1055.0 775.5v8l5-4z" fill="#000"/>
<rect x="1065" y="772" width="16" height="15" fill="#f0f0f0"/>
<path d="M1065.5 786.5V772.5H1080.5" stroke="#fff" fill="none"/>
<path d="M1065.5 786.5H1080.5V772.5" stroke="#505050" fill="none"/>
<path d="M1066.5 785.5H1079.5V773.5" stroke="#909090" fill="none"/>
<rect x="1075.5" y="775.5" width="1.5" height="8" fill="#000"/><path d="M1070.0 775.5v8l5-4z" fill="#000"/>
<path d="M1082 771l7 15.500h29l7.500-15.500z" fill="#fff"/>
<path d="M1082.5 771l7 15.500h29l7.500-15.500M1125 771.500h443" stroke="#000" fill="none"/>
<rect x="1001" y="771" width="81" height="1" fill="#808080"/>
<text x="1104" y="782" fill="#000010" font-size="11.3" text-anchor="middle" stroke="none" font-weight="bold" textLength="26.5" lengthAdjust="spacingAndGlyphs">Main</text>
<rect x="1568" y="771" width="17" height="7" fill="#f0f0f0"/><path d="M1568.5 777.500h16v-6" stroke="#696969" fill="none"/><path d="M1568.5 777v-5.500h15.5" stroke="#fff" fill="none"/>
</svg></body></html>
